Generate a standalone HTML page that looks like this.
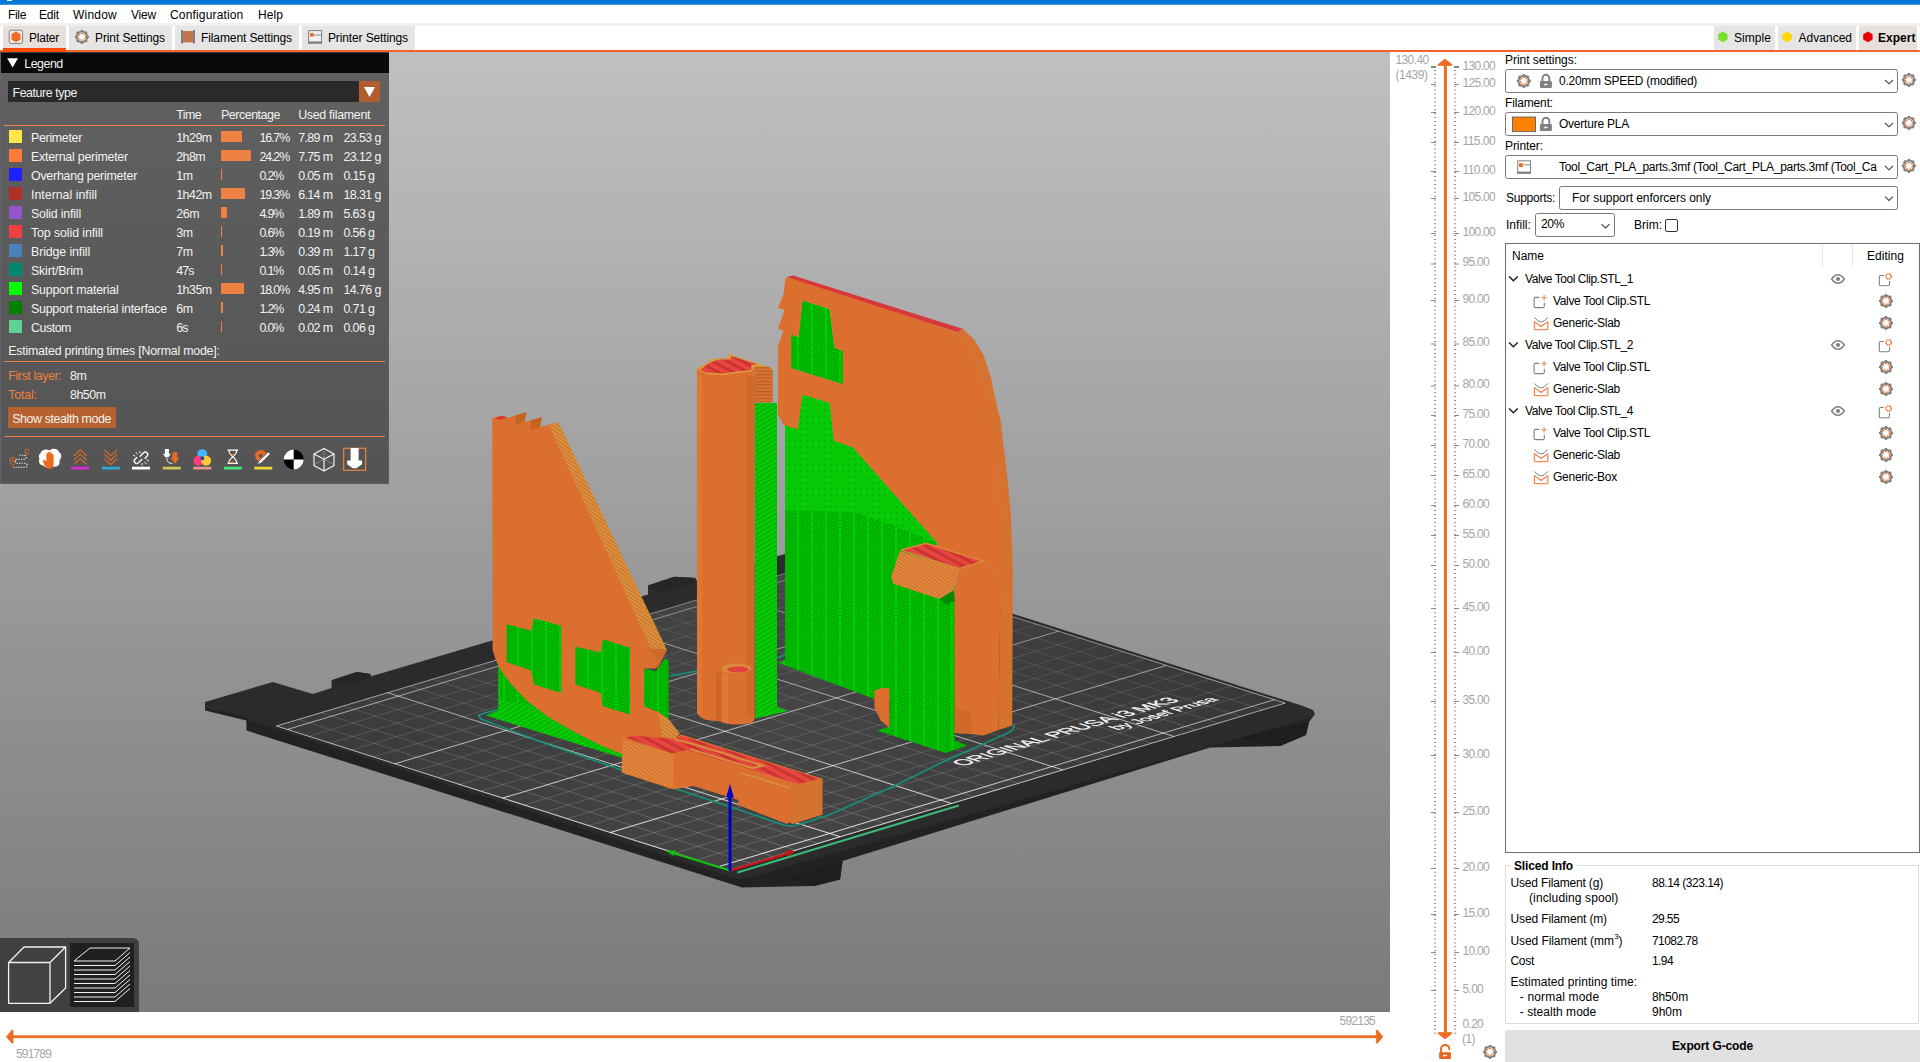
<!DOCTYPE html>
<html lang="en"><head><meta charset="utf-8"><title>PrusaSlicer</title>
<style>
html,body{margin:0;padding:0;width:1920px;height:1062px;overflow:hidden;background:#fff;font-family:'Liberation Sans',sans-serif;}
.a{position:absolute}
.t{position:absolute;white-space:pre;line-height:20px;height:20px;font-family:'Liberation Sans',sans-serif;}
#title{left:0;top:0;width:1920px;height:4px;background:#0078d7;border-bottom:1px solid #3d97e0}
#menusep{left:0;top:23px;width:1920px;height:3px;background:#f0f0f0}
.tab{position:absolute;top:26px;height:24px;background:#e5e5e5}
#oline{left:0;top:50px;width:1920px;height:2px;background:#f2642a}
#canvas{left:0;top:52px;width:1390px;height:960px;background:linear-gradient(#c0c0c0,#7a7a7a);overflow:hidden}
#legend{left:1px;top:52px;width:387px;height:431px;background:linear-gradient(#616161,#545454);border-right:1px solid #5c5c66;border-bottom:1px solid #5c5c66}
#lghead{left:1px;top:52px;width:388px;height:21px;background:#0a0a0a}
#lgcombo{left:8px;top:81px;width:351px;height:21px;background:#2a2a2a}
#lgbtn{left:359px;top:81px;width:21px;height:21px;background:#b05e30}
.osep{position:absolute;left:4px;width:381px;height:1px;background:#ee8040}
.sw{position:absolute;left:9px;width:13px;height:13px}
.bar{position:absolute;left:221px;height:11px;background:#ee8244}
#stealth{left:8px;top:407px;width:108px;height:21px;background:#b5622f}
#vtool{left:0;top:938px;width:139px;height:74px;background:#404040;border-top-right-radius:6px}
#vsel{left:70px;top:943px;width:64px;height:64px;background:#202020}
.combo{position:absolute;height:22px;border:1px solid #7a7a7a;border-radius:2.5px;background:#fff;box-sizing:content-box}
#olist{left:1505px;top:243px;width:413px;height:608px;border:1px solid #6e6e6e;background:#fff}
#sinfo{left:1505px;top:865px;width:1412px;height:157px;border:1px solid #dcdcdc}
#export{left:1505px;top:1030px;width:415px;height:32px;background:#e1e1e1}
</style></head><body>
<div class="a" id="title"></div>
<div class="a" id="wico" style="left:7px;top:0;width:5px;height:1px;background:#e8f1fa"></div>
<div class="a" id="menusep"></div>
<div class="tab" style="left:3px;width:63px;background:#e7dfdb"></div>
<div class="tab" style="left:69px;width:103px"></div>
<div class="tab" style="left:175px;width:124px"></div>
<div class="tab" style="left:302px;width:113px"></div>
<div class="tab" style="left:1714px;width:61px"></div>
<div class="tab" style="left:1778px;width:78px"></div>
<div class="tab" style="left:1859px;width:58px;background:#e7dfdb"></div>
<div class="a" id="oline"></div>
<div class="a" style="left:3px;top:48px;width:63px;height:4px;background:#fa4b00"></div>
<div class="a" id="canvas">
<svg class="a" style="left:0;top:0" width="1390" height="960" viewBox="0 52 1390 960">
<defs>
<pattern id="gs" width="14" height="4.4" patternUnits="userSpaceOnUse"><rect width="14" height="4.4" fill="#00e400"/><g fill="none" stroke="#009a00" stroke-width="1.25"><polyline points="0,4.4 7,0 14,4.4"/><polyline points="0,2.2 7,-2.2 14,2.2"/><polyline points="0,6.6 7,2.2 14,6.6"/></g><rect x="6.4" width="1.2" height="4.4" fill="#00a800" opacity="0.55"/><rect x="-0.6" width="1.2" height="4.4" fill="#00f000" opacity="0.5"/><rect x="13.4" width="1.2" height="4.4" fill="#00f000" opacity="0.5"/></pattern>
<pattern id="gc" width="6" height="6" patternUnits="userSpaceOnUse"><rect width="6" height="6" fill="#06cb06"/><circle cx="3" cy="3" r="1.25" fill="#05b805"/></pattern>
<pattern id="gd" width="4" height="4" patternUnits="userSpaceOnUse" patternTransform="rotate(-30)"><rect width="4" height="4" fill="#07cc07"/><rect width="4" height="1.3" fill="#05ac05"/></pattern>
<pattern id="rs" width="7" height="7" patternUnits="userSpaceOnUse" patternTransform="rotate(-62)"><rect width="7" height="7" fill="#e8453f"/><rect width="3" height="7" fill="#c93431"/></pattern>
<pattern id="oh" width="2" height="2" patternUnits="userSpaceOnUse"><rect width="2" height="2" fill="#e87733"/><rect width="1" height="1" fill="#cf672b"/><rect x="1" y="1" width="1" height="1" fill="#cf672b"/></pattern>
<pattern id="oy" width="3" height="3" patternUnits="userSpaceOnUse" patternTransform="rotate(35)"><rect width="3" height="3" fill="#d27a33"/><rect width="3" height="1" fill="#d9a040"/></pattern>
<pattern id="op" width="4" height="3.4" patternUnits="userSpaceOnUse"><rect width="4" height="3.4" fill="#d87431"/><rect width="4" height="1.2" fill="#b85f22"/></pattern>
<pattern id="oc" width="3" height="3" patternUnits="userSpaceOnUse" patternTransform="rotate(35)"><rect width="3" height="3" fill="#d46c2e"/><rect width="3" height="1" fill="#da7c33"/></pattern>
<pattern id="ob" width="3" height="3" patternUnits="userSpaceOnUse" patternTransform="rotate(35)"><rect width="3" height="3" fill="#d97732"/><rect width="3" height="1" fill="#e09244"/></pattern>
<linearGradient id="bedg" x1="0" y1="0" x2="1" y2="0"><stop offset="0" stop-color="#3a3a3a"/><stop offset="0.5" stop-color="#454545"/><stop offset="1" stop-color="#373737"/></linearGradient>
</defs>
<polygon points="205.0,702.0 205.0,710.5 246.4,720.4 246.4,730.5 742.0,887.5 814.0,886.0 840.0,879.5 842.5,861.0 1210.0,747.5 1280.0,746.0 1306.0,735.0 1309.0,722.0 1315.0,714.0 1300.0,708.0 740.0,868.0 250.0,716.0" fill="#222222" />
<polygon points="814.0,886.0 840.0,879.5 842.5,861.0 790.0,878.0" fill="#1e1e1e" />
<polygon points="1280.0,746.0 1306.0,735.0 1309.0,722.0 1240.0,738.0" fill="#1e1e1e" />
<polygon points="205.0,702.0 272.7,682.0 312.8,694.1 331.6,687.9 331.6,680.3 356.7,672.0 370.5,674.0 370.5,676.5 648.0,594.4 648.0,585.5 674.3,576.7 695.6,578.0 695.6,580.4 807.0,547.4 1012.0,613.5 1303.0,706.0 1313.0,710.0 1315.0,714.0 1310.0,718.0 745.0,878.5 737.0,879.0 730.0,877.0 250.0,720.5 246.0,717.0 205.0,708.0" fill="#2b2b2b" />
<polygon points="331.6,680.3 356.7,672.0 370.5,674.0 370.5,677.5 345.0,687.0" fill="#262626" />
<polygon points="648.0,585.5 674.3,576.7 695.6,578.0 695.6,582.0 662.0,592.0" fill="#262626" />
<polygon points="729.0,870.2 1285.2,703.1 832.2,559.3 276.5,726.0" fill="url(#bedg)" />
<line x1="729.0" y1="870.2" x2="683.6" y2="855.8" stroke="#fff" stroke-opacity="0.84" stroke-width="1.05"/>
<line x1="683.6" y1="855.8" x2="638.3" y2="841.4" stroke="#fff" stroke-opacity="0.82" stroke-width="1.04"/>
<line x1="638.3" y1="841.4" x2="593.1" y2="826.9" stroke="#fff" stroke-opacity="0.79" stroke-width="1.03"/>
<line x1="593.1" y1="826.9" x2="547.8" y2="812.5" stroke="#fff" stroke-opacity="0.77" stroke-width="1.03"/>
<line x1="547.8" y1="812.5" x2="502.5" y2="798.1" stroke="#fff" stroke-opacity="0.75" stroke-width="1.02"/>
<line x1="502.5" y1="798.1" x2="457.3" y2="783.7" stroke="#fff" stroke-opacity="0.72" stroke-width="1.01"/>
<line x1="457.3" y1="783.7" x2="412.1" y2="769.3" stroke="#fff" stroke-opacity="0.70" stroke-width="1.00"/>
<line x1="412.1" y1="769.3" x2="366.9" y2="754.8" stroke="#fff" stroke-opacity="0.68" stroke-width="1.00"/>
<line x1="366.9" y1="754.8" x2="321.7" y2="740.4" stroke="#fff" stroke-opacity="0.66" stroke-width="0.99"/>
<line x1="321.7" y1="740.4" x2="276.5" y2="726.0" stroke="#fff" stroke-opacity="0.63" stroke-width="0.98"/>
<line x1="751.2" y1="863.6" x2="705.9" y2="849.1" stroke="#fff" stroke-opacity="0.26" stroke-width="0.70"/>
<line x1="705.9" y1="849.1" x2="660.6" y2="834.7" stroke="#fff" stroke-opacity="0.26" stroke-width="0.69"/>
<line x1="660.6" y1="834.7" x2="615.3" y2="820.2" stroke="#fff" stroke-opacity="0.25" stroke-width="0.69"/>
<line x1="615.3" y1="820.2" x2="570.1" y2="805.8" stroke="#fff" stroke-opacity="0.24" stroke-width="0.68"/>
<line x1="570.1" y1="805.8" x2="524.8" y2="791.4" stroke="#fff" stroke-opacity="0.23" stroke-width="0.68"/>
<line x1="524.8" y1="791.4" x2="479.6" y2="777.0" stroke="#fff" stroke-opacity="0.23" stroke-width="0.67"/>
<line x1="479.6" y1="777.0" x2="434.3" y2="762.6" stroke="#fff" stroke-opacity="0.22" stroke-width="0.67"/>
<line x1="434.3" y1="762.6" x2="389.1" y2="748.2" stroke="#fff" stroke-opacity="0.21" stroke-width="0.66"/>
<line x1="389.1" y1="748.2" x2="343.9" y2="733.8" stroke="#fff" stroke-opacity="0.20" stroke-width="0.66"/>
<line x1="343.9" y1="733.8" x2="298.7" y2="719.4" stroke="#fff" stroke-opacity="0.20" stroke-width="0.65"/>
<line x1="773.5" y1="856.9" x2="728.2" y2="842.4" stroke="#fff" stroke-opacity="0.26" stroke-width="0.69"/>
<line x1="728.2" y1="842.4" x2="682.9" y2="828.0" stroke="#fff" stroke-opacity="0.25" stroke-width="0.69"/>
<line x1="682.9" y1="828.0" x2="637.6" y2="813.6" stroke="#fff" stroke-opacity="0.25" stroke-width="0.68"/>
<line x1="637.6" y1="813.6" x2="592.3" y2="799.1" stroke="#fff" stroke-opacity="0.24" stroke-width="0.68"/>
<line x1="592.3" y1="799.1" x2="547.1" y2="784.7" stroke="#fff" stroke-opacity="0.23" stroke-width="0.67"/>
<line x1="547.1" y1="784.7" x2="501.8" y2="770.3" stroke="#fff" stroke-opacity="0.22" stroke-width="0.67"/>
<line x1="501.8" y1="770.3" x2="456.6" y2="755.9" stroke="#fff" stroke-opacity="0.22" stroke-width="0.66"/>
<line x1="456.6" y1="755.9" x2="411.4" y2="741.5" stroke="#fff" stroke-opacity="0.21" stroke-width="0.66"/>
<line x1="411.4" y1="741.5" x2="366.2" y2="727.1" stroke="#fff" stroke-opacity="0.20" stroke-width="0.66"/>
<line x1="366.2" y1="727.1" x2="321.0" y2="712.7" stroke="#fff" stroke-opacity="0.19" stroke-width="0.65"/>
<line x1="795.8" y1="850.2" x2="750.4" y2="835.7" stroke="#fff" stroke-opacity="0.26" stroke-width="0.69"/>
<line x1="750.4" y1="835.7" x2="705.1" y2="821.3" stroke="#fff" stroke-opacity="0.25" stroke-width="0.69"/>
<line x1="705.1" y1="821.3" x2="659.8" y2="806.9" stroke="#fff" stroke-opacity="0.24" stroke-width="0.68"/>
<line x1="659.8" y1="806.9" x2="614.6" y2="792.5" stroke="#fff" stroke-opacity="0.23" stroke-width="0.68"/>
<line x1="614.6" y1="792.5" x2="569.3" y2="778.0" stroke="#fff" stroke-opacity="0.23" stroke-width="0.67"/>
<line x1="569.3" y1="778.0" x2="524.1" y2="763.6" stroke="#fff" stroke-opacity="0.22" stroke-width="0.67"/>
<line x1="524.1" y1="763.6" x2="478.8" y2="749.2" stroke="#fff" stroke-opacity="0.21" stroke-width="0.66"/>
<line x1="478.8" y1="749.2" x2="433.6" y2="734.8" stroke="#fff" stroke-opacity="0.21" stroke-width="0.66"/>
<line x1="433.6" y1="734.8" x2="388.4" y2="720.4" stroke="#fff" stroke-opacity="0.20" stroke-width="0.65"/>
<line x1="388.4" y1="720.4" x2="343.2" y2="706.0" stroke="#fff" stroke-opacity="0.19" stroke-width="0.65"/>
<line x1="818.0" y1="843.5" x2="772.7" y2="829.1" stroke="#fff" stroke-opacity="0.25" stroke-width="0.69"/>
<line x1="772.7" y1="829.1" x2="727.4" y2="814.6" stroke="#fff" stroke-opacity="0.25" stroke-width="0.68"/>
<line x1="727.4" y1="814.6" x2="682.1" y2="800.2" stroke="#fff" stroke-opacity="0.24" stroke-width="0.68"/>
<line x1="682.1" y1="800.2" x2="636.8" y2="785.8" stroke="#fff" stroke-opacity="0.23" stroke-width="0.67"/>
<line x1="636.8" y1="785.8" x2="591.6" y2="771.4" stroke="#fff" stroke-opacity="0.22" stroke-width="0.67"/>
<line x1="591.6" y1="771.4" x2="546.3" y2="756.9" stroke="#fff" stroke-opacity="0.22" stroke-width="0.67"/>
<line x1="546.3" y1="756.9" x2="501.1" y2="742.5" stroke="#fff" stroke-opacity="0.21" stroke-width="0.66"/>
<line x1="501.1" y1="742.5" x2="455.9" y2="728.1" stroke="#fff" stroke-opacity="0.20" stroke-width="0.66"/>
<line x1="455.9" y1="728.1" x2="410.7" y2="713.7" stroke="#fff" stroke-opacity="0.19" stroke-width="0.65"/>
<line x1="410.7" y1="713.7" x2="365.5" y2="699.3" stroke="#fff" stroke-opacity="0.19" stroke-width="0.65"/>
<line x1="840.3" y1="836.8" x2="795.0" y2="822.4" stroke="#fff" stroke-opacity="0.79" stroke-width="1.03"/>
<line x1="795.0" y1="822.4" x2="749.7" y2="807.9" stroke="#fff" stroke-opacity="0.76" stroke-width="1.02"/>
<line x1="749.7" y1="807.9" x2="704.4" y2="793.5" stroke="#fff" stroke-opacity="0.74" stroke-width="1.02"/>
<line x1="704.4" y1="793.5" x2="659.1" y2="779.1" stroke="#fff" stroke-opacity="0.72" stroke-width="1.01"/>
<line x1="659.1" y1="779.1" x2="613.8" y2="764.7" stroke="#fff" stroke-opacity="0.69" stroke-width="1.00"/>
<line x1="613.8" y1="764.7" x2="568.6" y2="750.3" stroke="#fff" stroke-opacity="0.67" stroke-width="0.99"/>
<line x1="568.6" y1="750.3" x2="523.3" y2="735.9" stroke="#fff" stroke-opacity="0.65" stroke-width="0.99"/>
<line x1="523.3" y1="735.9" x2="478.1" y2="721.5" stroke="#fff" stroke-opacity="0.63" stroke-width="0.98"/>
<line x1="478.1" y1="721.5" x2="432.9" y2="707.1" stroke="#fff" stroke-opacity="0.60" stroke-width="0.97"/>
<line x1="432.9" y1="707.1" x2="387.7" y2="692.7" stroke="#fff" stroke-opacity="0.58" stroke-width="0.97"/>
<line x1="862.5" y1="830.1" x2="817.2" y2="815.7" stroke="#fff" stroke-opacity="0.25" stroke-width="0.68"/>
<line x1="817.2" y1="815.7" x2="771.9" y2="801.3" stroke="#fff" stroke-opacity="0.24" stroke-width="0.68"/>
<line x1="771.9" y1="801.3" x2="726.6" y2="786.8" stroke="#fff" stroke-opacity="0.23" stroke-width="0.68"/>
<line x1="726.6" y1="786.8" x2="681.3" y2="772.4" stroke="#fff" stroke-opacity="0.22" stroke-width="0.67"/>
<line x1="681.3" y1="772.4" x2="636.1" y2="758.0" stroke="#fff" stroke-opacity="0.22" stroke-width="0.67"/>
<line x1="636.1" y1="758.0" x2="590.8" y2="743.6" stroke="#fff" stroke-opacity="0.21" stroke-width="0.66"/>
<line x1="590.8" y1="743.6" x2="545.6" y2="729.2" stroke="#fff" stroke-opacity="0.20" stroke-width="0.66"/>
<line x1="545.6" y1="729.2" x2="500.4" y2="714.8" stroke="#fff" stroke-opacity="0.20" stroke-width="0.65"/>
<line x1="500.4" y1="714.8" x2="455.1" y2="700.4" stroke="#fff" stroke-opacity="0.19" stroke-width="0.65"/>
<line x1="455.1" y1="700.4" x2="410.0" y2="686.0" stroke="#fff" stroke-opacity="0.18" stroke-width="0.64"/>
<line x1="884.8" y1="823.4" x2="839.5" y2="809.0" stroke="#fff" stroke-opacity="0.24" stroke-width="0.68"/>
<line x1="839.5" y1="809.0" x2="794.2" y2="794.6" stroke="#fff" stroke-opacity="0.24" stroke-width="0.68"/>
<line x1="794.2" y1="794.6" x2="748.9" y2="780.1" stroke="#fff" stroke-opacity="0.23" stroke-width="0.67"/>
<line x1="748.9" y1="780.1" x2="703.6" y2="765.7" stroke="#fff" stroke-opacity="0.22" stroke-width="0.67"/>
<line x1="703.6" y1="765.7" x2="658.3" y2="751.3" stroke="#fff" stroke-opacity="0.21" stroke-width="0.66"/>
<line x1="658.3" y1="751.3" x2="613.1" y2="736.9" stroke="#fff" stroke-opacity="0.21" stroke-width="0.66"/>
<line x1="613.1" y1="736.9" x2="567.8" y2="722.5" stroke="#fff" stroke-opacity="0.20" stroke-width="0.65"/>
<line x1="567.8" y1="722.5" x2="522.6" y2="708.1" stroke="#fff" stroke-opacity="0.19" stroke-width="0.65"/>
<line x1="522.6" y1="708.1" x2="477.4" y2="693.7" stroke="#fff" stroke-opacity="0.18" stroke-width="0.64"/>
<line x1="477.4" y1="693.7" x2="432.2" y2="679.3" stroke="#fff" stroke-opacity="0.18" stroke-width="0.64"/>
<line x1="907.1" y1="816.7" x2="861.7" y2="802.3" stroke="#fff" stroke-opacity="0.24" stroke-width="0.68"/>
<line x1="861.7" y1="802.3" x2="816.4" y2="787.9" stroke="#fff" stroke-opacity="0.23" stroke-width="0.68"/>
<line x1="816.4" y1="787.9" x2="771.1" y2="773.5" stroke="#fff" stroke-opacity="0.22" stroke-width="0.67"/>
<line x1="771.1" y1="773.5" x2="725.8" y2="759.1" stroke="#fff" stroke-opacity="0.22" stroke-width="0.67"/>
<line x1="725.8" y1="759.1" x2="680.6" y2="744.6" stroke="#fff" stroke-opacity="0.21" stroke-width="0.66"/>
<line x1="680.6" y1="744.6" x2="635.3" y2="730.2" stroke="#fff" stroke-opacity="0.20" stroke-width="0.66"/>
<line x1="635.3" y1="730.2" x2="590.1" y2="715.8" stroke="#fff" stroke-opacity="0.20" stroke-width="0.65"/>
<line x1="590.1" y1="715.8" x2="544.8" y2="701.4" stroke="#fff" stroke-opacity="0.19" stroke-width="0.65"/>
<line x1="544.8" y1="701.4" x2="499.6" y2="687.0" stroke="#fff" stroke-opacity="0.18" stroke-width="0.64"/>
<line x1="499.6" y1="687.0" x2="454.4" y2="672.7" stroke="#fff" stroke-opacity="0.17" stroke-width="0.64"/>
<line x1="929.3" y1="810.1" x2="884.0" y2="795.6" stroke="#fff" stroke-opacity="0.24" stroke-width="0.68"/>
<line x1="884.0" y1="795.6" x2="838.7" y2="781.2" stroke="#fff" stroke-opacity="0.23" stroke-width="0.67"/>
<line x1="838.7" y1="781.2" x2="793.4" y2="766.8" stroke="#fff" stroke-opacity="0.22" stroke-width="0.67"/>
<line x1="793.4" y1="766.8" x2="748.1" y2="752.4" stroke="#fff" stroke-opacity="0.21" stroke-width="0.66"/>
<line x1="748.1" y1="752.4" x2="702.8" y2="738.0" stroke="#fff" stroke-opacity="0.21" stroke-width="0.66"/>
<line x1="702.8" y1="738.0" x2="657.6" y2="723.6" stroke="#fff" stroke-opacity="0.20" stroke-width="0.65"/>
<line x1="657.6" y1="723.6" x2="612.3" y2="709.2" stroke="#fff" stroke-opacity="0.19" stroke-width="0.65"/>
<line x1="612.3" y1="709.2" x2="567.1" y2="694.8" stroke="#fff" stroke-opacity="0.19" stroke-width="0.64"/>
<line x1="567.1" y1="694.8" x2="521.9" y2="680.4" stroke="#fff" stroke-opacity="0.18" stroke-width="0.64"/>
<line x1="521.9" y1="680.4" x2="476.7" y2="666.0" stroke="#fff" stroke-opacity="0.17" stroke-width="0.64"/>
<line x1="951.6" y1="803.4" x2="906.2" y2="788.9" stroke="#fff" stroke-opacity="0.73" stroke-width="1.01"/>
<line x1="906.2" y1="788.9" x2="860.9" y2="774.5" stroke="#fff" stroke-opacity="0.71" stroke-width="1.01"/>
<line x1="860.9" y1="774.5" x2="815.6" y2="760.1" stroke="#fff" stroke-opacity="0.69" stroke-width="1.00"/>
<line x1="815.6" y1="760.1" x2="770.3" y2="745.7" stroke="#fff" stroke-opacity="0.66" stroke-width="0.99"/>
<line x1="770.3" y1="745.7" x2="725.1" y2="731.3" stroke="#fff" stroke-opacity="0.64" stroke-width="0.99"/>
<line x1="725.1" y1="731.3" x2="679.8" y2="716.9" stroke="#fff" stroke-opacity="0.62" stroke-width="0.98"/>
<line x1="679.8" y1="716.9" x2="634.5" y2="702.5" stroke="#fff" stroke-opacity="0.60" stroke-width="0.97"/>
<line x1="634.5" y1="702.5" x2="589.3" y2="688.1" stroke="#fff" stroke-opacity="0.57" stroke-width="0.96"/>
<line x1="589.3" y1="688.1" x2="544.1" y2="673.7" stroke="#fff" stroke-opacity="0.55" stroke-width="0.96"/>
<line x1="544.1" y1="673.7" x2="498.9" y2="659.3" stroke="#fff" stroke-opacity="0.53" stroke-width="0.95"/>
<line x1="973.8" y1="796.7" x2="928.5" y2="782.3" stroke="#fff" stroke-opacity="0.23" stroke-width="0.67"/>
<line x1="928.5" y1="782.3" x2="883.2" y2="767.8" stroke="#fff" stroke-opacity="0.22" stroke-width="0.67"/>
<line x1="883.2" y1="767.8" x2="837.9" y2="753.4" stroke="#fff" stroke-opacity="0.21" stroke-width="0.66"/>
<line x1="837.9" y1="753.4" x2="792.6" y2="739.0" stroke="#fff" stroke-opacity="0.21" stroke-width="0.66"/>
<line x1="792.6" y1="739.0" x2="747.3" y2="724.6" stroke="#fff" stroke-opacity="0.20" stroke-width="0.65"/>
<line x1="747.3" y1="724.6" x2="702.0" y2="710.2" stroke="#fff" stroke-opacity="0.19" stroke-width="0.65"/>
<line x1="702.0" y1="710.2" x2="656.8" y2="695.8" stroke="#fff" stroke-opacity="0.19" stroke-width="0.65"/>
<line x1="656.8" y1="695.8" x2="611.6" y2="681.4" stroke="#fff" stroke-opacity="0.18" stroke-width="0.64"/>
<line x1="611.6" y1="681.4" x2="566.3" y2="667.0" stroke="#fff" stroke-opacity="0.17" stroke-width="0.64"/>
<line x1="566.3" y1="667.0" x2="521.1" y2="652.7" stroke="#fff" stroke-opacity="0.16" stroke-width="0.63"/>
<line x1="996.1" y1="790.0" x2="950.7" y2="775.6" stroke="#fff" stroke-opacity="0.23" stroke-width="0.67"/>
<line x1="950.7" y1="775.6" x2="905.4" y2="761.2" stroke="#fff" stroke-opacity="0.22" stroke-width="0.67"/>
<line x1="905.4" y1="761.2" x2="860.1" y2="746.7" stroke="#fff" stroke-opacity="0.21" stroke-width="0.66"/>
<line x1="860.1" y1="746.7" x2="814.8" y2="732.3" stroke="#fff" stroke-opacity="0.20" stroke-width="0.66"/>
<line x1="814.8" y1="732.3" x2="769.5" y2="717.9" stroke="#fff" stroke-opacity="0.20" stroke-width="0.65"/>
<line x1="769.5" y1="717.9" x2="724.3" y2="703.5" stroke="#fff" stroke-opacity="0.19" stroke-width="0.65"/>
<line x1="724.3" y1="703.5" x2="679.0" y2="689.1" stroke="#fff" stroke-opacity="0.18" stroke-width="0.64"/>
<line x1="679.0" y1="689.1" x2="633.8" y2="674.7" stroke="#fff" stroke-opacity="0.18" stroke-width="0.64"/>
<line x1="633.8" y1="674.7" x2="588.6" y2="660.4" stroke="#fff" stroke-opacity="0.17" stroke-width="0.63"/>
<line x1="588.6" y1="660.4" x2="543.4" y2="646.0" stroke="#fff" stroke-opacity="0.16" stroke-width="0.63"/>
<line x1="1018.3" y1="783.3" x2="973.0" y2="768.9" stroke="#fff" stroke-opacity="0.22" stroke-width="0.67"/>
<line x1="973.0" y1="768.9" x2="927.7" y2="754.5" stroke="#fff" stroke-opacity="0.22" stroke-width="0.66"/>
<line x1="927.7" y1="754.5" x2="882.4" y2="740.1" stroke="#fff" stroke-opacity="0.21" stroke-width="0.66"/>
<line x1="882.4" y1="740.1" x2="837.1" y2="725.7" stroke="#fff" stroke-opacity="0.20" stroke-width="0.66"/>
<line x1="837.1" y1="725.7" x2="791.8" y2="711.3" stroke="#fff" stroke-opacity="0.19" stroke-width="0.65"/>
<line x1="791.8" y1="711.3" x2="746.5" y2="696.9" stroke="#fff" stroke-opacity="0.19" stroke-width="0.65"/>
<line x1="746.5" y1="696.9" x2="701.3" y2="682.5" stroke="#fff" stroke-opacity="0.18" stroke-width="0.64"/>
<line x1="701.3" y1="682.5" x2="656.0" y2="668.1" stroke="#fff" stroke-opacity="0.17" stroke-width="0.64"/>
<line x1="656.0" y1="668.1" x2="610.8" y2="653.7" stroke="#fff" stroke-opacity="0.16" stroke-width="0.63"/>
<line x1="610.8" y1="653.7" x2="565.6" y2="639.3" stroke="#fff" stroke-opacity="0.16" stroke-width="0.63"/>
<line x1="1040.6" y1="776.6" x2="995.2" y2="762.2" stroke="#fff" stroke-opacity="0.22" stroke-width="0.67"/>
<line x1="995.2" y1="762.2" x2="949.9" y2="747.8" stroke="#fff" stroke-opacity="0.21" stroke-width="0.66"/>
<line x1="949.9" y1="747.8" x2="904.6" y2="733.4" stroke="#fff" stroke-opacity="0.20" stroke-width="0.66"/>
<line x1="904.6" y1="733.4" x2="859.3" y2="719.0" stroke="#fff" stroke-opacity="0.20" stroke-width="0.65"/>
<line x1="859.3" y1="719.0" x2="814.0" y2="704.6" stroke="#fff" stroke-opacity="0.19" stroke-width="0.65"/>
<line x1="814.0" y1="704.6" x2="768.8" y2="690.2" stroke="#fff" stroke-opacity="0.18" stroke-width="0.64"/>
<line x1="768.8" y1="690.2" x2="723.5" y2="675.8" stroke="#fff" stroke-opacity="0.18" stroke-width="0.64"/>
<line x1="723.5" y1="675.8" x2="678.3" y2="661.4" stroke="#fff" stroke-opacity="0.17" stroke-width="0.63"/>
<line x1="678.3" y1="661.4" x2="633.0" y2="647.0" stroke="#fff" stroke-opacity="0.16" stroke-width="0.63"/>
<line x1="633.0" y1="647.0" x2="587.8" y2="632.6" stroke="#fff" stroke-opacity="0.15" stroke-width="0.62"/>
<line x1="1062.8" y1="769.9" x2="1017.5" y2="755.5" stroke="#fff" stroke-opacity="0.68" stroke-width="1.00"/>
<line x1="1017.5" y1="755.5" x2="972.2" y2="741.1" stroke="#fff" stroke-opacity="0.66" stroke-width="0.99"/>
<line x1="972.2" y1="741.1" x2="926.8" y2="726.7" stroke="#fff" stroke-opacity="0.63" stroke-width="0.98"/>
<line x1="926.8" y1="726.7" x2="881.5" y2="712.3" stroke="#fff" stroke-opacity="0.61" stroke-width="0.98"/>
<line x1="881.5" y1="712.3" x2="836.3" y2="697.9" stroke="#fff" stroke-opacity="0.59" stroke-width="0.97"/>
<line x1="836.3" y1="697.9" x2="791.0" y2="683.5" stroke="#fff" stroke-opacity="0.56" stroke-width="0.96"/>
<line x1="791.0" y1="683.5" x2="745.7" y2="669.1" stroke="#fff" stroke-opacity="0.54" stroke-width="0.95"/>
<line x1="745.7" y1="669.1" x2="700.5" y2="654.7" stroke="#fff" stroke-opacity="0.52" stroke-width="0.95"/>
<line x1="700.5" y1="654.7" x2="655.3" y2="640.4" stroke="#fff" stroke-opacity="0.50" stroke-width="0.94"/>
<line x1="655.3" y1="640.4" x2="610.0" y2="626.0" stroke="#fff" stroke-opacity="0.47" stroke-width="0.93"/>
<line x1="1085.1" y1="763.3" x2="1039.7" y2="748.8" stroke="#fff" stroke-opacity="0.21" stroke-width="0.66"/>
<line x1="1039.7" y1="748.8" x2="994.4" y2="734.4" stroke="#fff" stroke-opacity="0.21" stroke-width="0.66"/>
<line x1="994.4" y1="734.4" x2="949.1" y2="720.0" stroke="#fff" stroke-opacity="0.20" stroke-width="0.65"/>
<line x1="949.1" y1="720.0" x2="903.8" y2="705.6" stroke="#fff" stroke-opacity="0.19" stroke-width="0.65"/>
<line x1="903.8" y1="705.6" x2="858.5" y2="691.2" stroke="#fff" stroke-opacity="0.18" stroke-width="0.64"/>
<line x1="858.5" y1="691.2" x2="813.2" y2="676.8" stroke="#fff" stroke-opacity="0.18" stroke-width="0.64"/>
<line x1="813.2" y1="676.8" x2="768.0" y2="662.4" stroke="#fff" stroke-opacity="0.17" stroke-width="0.63"/>
<line x1="768.0" y1="662.4" x2="722.7" y2="648.1" stroke="#fff" stroke-opacity="0.16" stroke-width="0.63"/>
<line x1="722.7" y1="648.1" x2="677.5" y2="633.7" stroke="#fff" stroke-opacity="0.15" stroke-width="0.62"/>
<line x1="677.5" y1="633.7" x2="632.3" y2="619.3" stroke="#fff" stroke-opacity="0.15" stroke-width="0.62"/>
<line x1="1107.3" y1="756.6" x2="1062.0" y2="742.2" stroke="#fff" stroke-opacity="0.21" stroke-width="0.66"/>
<line x1="1062.0" y1="742.2" x2="1016.6" y2="727.8" stroke="#fff" stroke-opacity="0.20" stroke-width="0.66"/>
<line x1="1016.6" y1="727.8" x2="971.3" y2="713.4" stroke="#fff" stroke-opacity="0.19" stroke-width="0.65"/>
<line x1="971.3" y1="713.4" x2="926.0" y2="699.0" stroke="#fff" stroke-opacity="0.19" stroke-width="0.65"/>
<line x1="926.0" y1="699.0" x2="880.7" y2="684.6" stroke="#fff" stroke-opacity="0.18" stroke-width="0.64"/>
<line x1="880.7" y1="684.6" x2="835.5" y2="670.2" stroke="#fff" stroke-opacity="0.17" stroke-width="0.64"/>
<line x1="835.5" y1="670.2" x2="790.2" y2="655.8" stroke="#fff" stroke-opacity="0.17" stroke-width="0.63"/>
<line x1="790.2" y1="655.8" x2="744.9" y2="641.4" stroke="#fff" stroke-opacity="0.16" stroke-width="0.63"/>
<line x1="744.9" y1="641.4" x2="699.7" y2="627.0" stroke="#fff" stroke-opacity="0.15" stroke-width="0.62"/>
<line x1="699.7" y1="627.0" x2="654.5" y2="612.6" stroke="#fff" stroke-opacity="0.14" stroke-width="0.62"/>
<line x1="1129.6" y1="749.9" x2="1084.2" y2="735.5" stroke="#fff" stroke-opacity="0.21" stroke-width="0.66"/>
<line x1="1084.2" y1="735.5" x2="1038.9" y2="721.1" stroke="#fff" stroke-opacity="0.20" stroke-width="0.65"/>
<line x1="1038.9" y1="721.1" x2="993.6" y2="706.7" stroke="#fff" stroke-opacity="0.19" stroke-width="0.65"/>
<line x1="993.6" y1="706.7" x2="948.2" y2="692.3" stroke="#fff" stroke-opacity="0.18" stroke-width="0.64"/>
<line x1="948.2" y1="692.3" x2="903.0" y2="677.9" stroke="#fff" stroke-opacity="0.18" stroke-width="0.64"/>
<line x1="903.0" y1="677.9" x2="857.7" y2="663.5" stroke="#fff" stroke-opacity="0.17" stroke-width="0.63"/>
<line x1="857.7" y1="663.5" x2="812.4" y2="649.1" stroke="#fff" stroke-opacity="0.16" stroke-width="0.63"/>
<line x1="812.4" y1="649.1" x2="767.2" y2="634.7" stroke="#fff" stroke-opacity="0.15" stroke-width="0.63"/>
<line x1="767.2" y1="634.7" x2="721.9" y2="620.3" stroke="#fff" stroke-opacity="0.15" stroke-width="0.62"/>
<line x1="721.9" y1="620.3" x2="676.7" y2="606.0" stroke="#fff" stroke-opacity="0.14" stroke-width="0.62"/>
<line x1="1151.8" y1="743.2" x2="1106.4" y2="728.8" stroke="#fff" stroke-opacity="0.20" stroke-width="0.66"/>
<line x1="1106.4" y1="728.8" x2="1061.1" y2="714.4" stroke="#fff" stroke-opacity="0.20" stroke-width="0.65"/>
<line x1="1061.1" y1="714.4" x2="1015.8" y2="700.0" stroke="#fff" stroke-opacity="0.19" stroke-width="0.65"/>
<line x1="1015.8" y1="700.0" x2="970.5" y2="685.6" stroke="#fff" stroke-opacity="0.18" stroke-width="0.64"/>
<line x1="970.5" y1="685.6" x2="925.2" y2="671.2" stroke="#fff" stroke-opacity="0.17" stroke-width="0.64"/>
<line x1="925.2" y1="671.2" x2="879.9" y2="656.8" stroke="#fff" stroke-opacity="0.17" stroke-width="0.63"/>
<line x1="879.9" y1="656.8" x2="834.6" y2="642.4" stroke="#fff" stroke-opacity="0.16" stroke-width="0.63"/>
<line x1="834.6" y1="642.4" x2="789.4" y2="628.1" stroke="#fff" stroke-opacity="0.15" stroke-width="0.62"/>
<line x1="789.4" y1="628.1" x2="744.2" y2="613.7" stroke="#fff" stroke-opacity="0.14" stroke-width="0.62"/>
<line x1="744.2" y1="613.7" x2="698.9" y2="599.3" stroke="#fff" stroke-opacity="0.14" stroke-width="0.61"/>
<line x1="1174.0" y1="736.5" x2="1128.7" y2="722.1" stroke="#fff" stroke-opacity="0.63" stroke-width="0.98"/>
<line x1="1128.7" y1="722.1" x2="1083.3" y2="707.7" stroke="#fff" stroke-opacity="0.60" stroke-width="0.97"/>
<line x1="1083.3" y1="707.7" x2="1038.0" y2="693.3" stroke="#fff" stroke-opacity="0.58" stroke-width="0.97"/>
<line x1="1038.0" y1="693.3" x2="992.7" y2="678.9" stroke="#fff" stroke-opacity="0.56" stroke-width="0.96"/>
<line x1="992.7" y1="678.9" x2="947.4" y2="664.5" stroke="#fff" stroke-opacity="0.53" stroke-width="0.95"/>
<line x1="947.4" y1="664.5" x2="902.1" y2="650.1" stroke="#fff" stroke-opacity="0.51" stroke-width="0.95"/>
<line x1="902.1" y1="650.1" x2="856.9" y2="635.8" stroke="#fff" stroke-opacity="0.49" stroke-width="0.94"/>
<line x1="856.9" y1="635.8" x2="811.6" y2="621.4" stroke="#fff" stroke-opacity="0.47" stroke-width="0.93"/>
<line x1="811.6" y1="621.4" x2="766.4" y2="607.0" stroke="#fff" stroke-opacity="0.44" stroke-width="0.92"/>
<line x1="766.4" y1="607.0" x2="721.2" y2="592.6" stroke="#fff" stroke-opacity="0.42" stroke-width="0.92"/>
<line x1="1196.3" y1="729.9" x2="1150.9" y2="715.4" stroke="#fff" stroke-opacity="0.20" stroke-width="0.65"/>
<line x1="1150.9" y1="715.4" x2="1105.6" y2="701.0" stroke="#fff" stroke-opacity="0.19" stroke-width="0.65"/>
<line x1="1105.6" y1="701.0" x2="1060.3" y2="686.6" stroke="#fff" stroke-opacity="0.18" stroke-width="0.64"/>
<line x1="1060.3" y1="686.6" x2="1014.9" y2="672.3" stroke="#fff" stroke-opacity="0.17" stroke-width="0.64"/>
<line x1="1014.9" y1="672.3" x2="969.6" y2="657.9" stroke="#fff" stroke-opacity="0.17" stroke-width="0.63"/>
<line x1="969.6" y1="657.9" x2="924.4" y2="643.5" stroke="#fff" stroke-opacity="0.16" stroke-width="0.63"/>
<line x1="924.4" y1="643.5" x2="879.1" y2="629.1" stroke="#fff" stroke-opacity="0.15" stroke-width="0.62"/>
<line x1="879.1" y1="629.1" x2="833.8" y2="614.7" stroke="#fff" stroke-opacity="0.14" stroke-width="0.62"/>
<line x1="833.8" y1="614.7" x2="788.6" y2="600.3" stroke="#fff" stroke-opacity="0.14" stroke-width="0.61"/>
<line x1="788.6" y1="600.3" x2="743.4" y2="586.0" stroke="#fff" stroke-opacity="0.13" stroke-width="0.61"/>
<line x1="1218.5" y1="723.2" x2="1173.2" y2="708.8" stroke="#fff" stroke-opacity="0.19" stroke-width="0.65"/>
<line x1="1173.2" y1="708.8" x2="1127.8" y2="694.4" stroke="#fff" stroke-opacity="0.18" stroke-width="0.64"/>
<line x1="1127.8" y1="694.4" x2="1082.5" y2="680.0" stroke="#fff" stroke-opacity="0.18" stroke-width="0.64"/>
<line x1="1082.5" y1="680.0" x2="1037.2" y2="665.6" stroke="#fff" stroke-opacity="0.17" stroke-width="0.64"/>
<line x1="1037.2" y1="665.6" x2="991.9" y2="651.2" stroke="#fff" stroke-opacity="0.16" stroke-width="0.63"/>
<line x1="991.9" y1="651.2" x2="946.6" y2="636.8" stroke="#fff" stroke-opacity="0.16" stroke-width="0.63"/>
<line x1="946.6" y1="636.8" x2="901.3" y2="622.4" stroke="#fff" stroke-opacity="0.15" stroke-width="0.62"/>
<line x1="901.3" y1="622.4" x2="856.1" y2="608.1" stroke="#fff" stroke-opacity="0.14" stroke-width="0.62"/>
<line x1="856.1" y1="608.1" x2="810.8" y2="593.7" stroke="#fff" stroke-opacity="0.13" stroke-width="0.61"/>
<line x1="810.8" y1="593.7" x2="765.6" y2="579.3" stroke="#fff" stroke-opacity="0.13" stroke-width="0.61"/>
<line x1="1240.7" y1="716.5" x2="1195.4" y2="702.1" stroke="#fff" stroke-opacity="0.19" stroke-width="0.65"/>
<line x1="1195.4" y1="702.1" x2="1150.0" y2="687.7" stroke="#fff" stroke-opacity="0.18" stroke-width="0.64"/>
<line x1="1150.0" y1="687.7" x2="1104.7" y2="673.3" stroke="#fff" stroke-opacity="0.17" stroke-width="0.64"/>
<line x1="1104.7" y1="673.3" x2="1059.4" y2="658.9" stroke="#fff" stroke-opacity="0.17" stroke-width="0.63"/>
<line x1="1059.4" y1="658.9" x2="1014.1" y2="644.5" stroke="#fff" stroke-opacity="0.16" stroke-width="0.63"/>
<line x1="1014.1" y1="644.5" x2="968.8" y2="630.1" stroke="#fff" stroke-opacity="0.15" stroke-width="0.62"/>
<line x1="968.8" y1="630.1" x2="923.5" y2="615.8" stroke="#fff" stroke-opacity="0.15" stroke-width="0.62"/>
<line x1="923.5" y1="615.8" x2="878.3" y2="601.4" stroke="#fff" stroke-opacity="0.14" stroke-width="0.61"/>
<line x1="878.3" y1="601.4" x2="833.0" y2="587.0" stroke="#fff" stroke-opacity="0.13" stroke-width="0.61"/>
<line x1="833.0" y1="587.0" x2="787.8" y2="572.7" stroke="#fff" stroke-opacity="0.12" stroke-width="0.60"/>
<line x1="1263.0" y1="709.8" x2="1217.6" y2="695.4" stroke="#fff" stroke-opacity="0.19" stroke-width="0.65"/>
<line x1="1217.6" y1="695.4" x2="1172.3" y2="681.0" stroke="#fff" stroke-opacity="0.18" stroke-width="0.64"/>
<line x1="1172.3" y1="681.0" x2="1126.9" y2="666.6" stroke="#fff" stroke-opacity="0.17" stroke-width="0.64"/>
<line x1="1126.9" y1="666.6" x2="1081.6" y2="652.2" stroke="#fff" stroke-opacity="0.16" stroke-width="0.63"/>
<line x1="1081.6" y1="652.2" x2="1036.3" y2="637.8" stroke="#fff" stroke-opacity="0.16" stroke-width="0.63"/>
<line x1="1036.3" y1="637.8" x2="991.0" y2="623.5" stroke="#fff" stroke-opacity="0.15" stroke-width="0.62"/>
<line x1="991.0" y1="623.5" x2="945.8" y2="609.1" stroke="#fff" stroke-opacity="0.14" stroke-width="0.62"/>
<line x1="945.8" y1="609.1" x2="900.5" y2="594.7" stroke="#fff" stroke-opacity="0.13" stroke-width="0.61"/>
<line x1="900.5" y1="594.7" x2="855.3" y2="580.4" stroke="#fff" stroke-opacity="0.13" stroke-width="0.61"/>
<line x1="855.3" y1="580.4" x2="810.0" y2="566.0" stroke="#fff" stroke-opacity="0.12" stroke-width="0.60"/>
<line x1="1285.2" y1="703.1" x2="1239.9" y2="688.7" stroke="#fff" stroke-opacity="0.57" stroke-width="0.96"/>
<line x1="1239.9" y1="688.7" x2="1194.5" y2="674.3" stroke="#fff" stroke-opacity="0.55" stroke-width="0.96"/>
<line x1="1194.5" y1="674.3" x2="1149.2" y2="659.9" stroke="#fff" stroke-opacity="0.53" stroke-width="0.95"/>
<line x1="1149.2" y1="659.9" x2="1103.9" y2="645.6" stroke="#fff" stroke-opacity="0.50" stroke-width="0.94"/>
<line x1="1103.9" y1="645.6" x2="1058.5" y2="631.2" stroke="#fff" stroke-opacity="0.48" stroke-width="0.94"/>
<line x1="1058.5" y1="631.2" x2="1013.3" y2="616.8" stroke="#fff" stroke-opacity="0.46" stroke-width="0.93"/>
<line x1="1013.3" y1="616.8" x2="968.0" y2="602.4" stroke="#fff" stroke-opacity="0.44" stroke-width="0.92"/>
<line x1="968.0" y1="602.4" x2="922.7" y2="588.1" stroke="#fff" stroke-opacity="0.41" stroke-width="0.92"/>
<line x1="922.7" y1="588.1" x2="877.5" y2="573.7" stroke="#fff" stroke-opacity="0.39" stroke-width="0.91"/>
<line x1="877.5" y1="573.7" x2="832.2" y2="559.3" stroke="#fff" stroke-opacity="0.37" stroke-width="0.90"/>
<line x1="729.0" y1="870.2" x2="784.6" y2="853.5" stroke="#fff" stroke-opacity="0.84" stroke-width="1.05"/>
<line x1="784.6" y1="853.5" x2="840.3" y2="836.8" stroke="#fff" stroke-opacity="0.81" stroke-width="1.04"/>
<line x1="840.3" y1="836.8" x2="895.9" y2="820.1" stroke="#fff" stroke-opacity="0.78" stroke-width="1.03"/>
<line x1="895.9" y1="820.1" x2="951.6" y2="803.4" stroke="#fff" stroke-opacity="0.76" stroke-width="1.02"/>
<line x1="951.6" y1="803.4" x2="1007.2" y2="786.7" stroke="#fff" stroke-opacity="0.73" stroke-width="1.01"/>
<line x1="1007.2" y1="786.7" x2="1062.8" y2="769.9" stroke="#fff" stroke-opacity="0.70" stroke-width="1.00"/>
<line x1="1062.8" y1="769.9" x2="1118.4" y2="753.2" stroke="#fff" stroke-opacity="0.68" stroke-width="1.00"/>
<line x1="1118.4" y1="753.2" x2="1174.0" y2="736.5" stroke="#fff" stroke-opacity="0.65" stroke-width="0.99"/>
<line x1="1174.0" y1="736.5" x2="1229.6" y2="719.8" stroke="#fff" stroke-opacity="0.62" stroke-width="0.98"/>
<line x1="1229.6" y1="719.8" x2="1285.2" y2="703.1" stroke="#fff" stroke-opacity="0.60" stroke-width="0.97"/>
<line x1="718.2" y1="866.8" x2="773.8" y2="850.1" stroke="#fff" stroke-opacity="0.83" stroke-width="1.04"/>
<line x1="773.8" y1="850.1" x2="829.5" y2="833.4" stroke="#fff" stroke-opacity="0.81" stroke-width="1.04"/>
<line x1="829.5" y1="833.4" x2="885.1" y2="816.6" stroke="#fff" stroke-opacity="0.78" stroke-width="1.03"/>
<line x1="885.1" y1="816.6" x2="940.8" y2="799.9" stroke="#fff" stroke-opacity="0.75" stroke-width="1.02"/>
<line x1="940.8" y1="799.9" x2="996.4" y2="783.2" stroke="#fff" stroke-opacity="0.73" stroke-width="1.01"/>
<line x1="996.4" y1="783.2" x2="1052.0" y2="766.5" stroke="#fff" stroke-opacity="0.70" stroke-width="1.00"/>
<line x1="1052.0" y1="766.5" x2="1107.6" y2="749.8" stroke="#fff" stroke-opacity="0.67" stroke-width="1.00"/>
<line x1="1107.6" y1="749.8" x2="1163.2" y2="733.1" stroke="#fff" stroke-opacity="0.65" stroke-width="0.99"/>
<line x1="1163.2" y1="733.1" x2="1218.8" y2="716.4" stroke="#fff" stroke-opacity="0.62" stroke-width="0.98"/>
<line x1="1218.8" y1="716.4" x2="1274.4" y2="699.7" stroke="#fff" stroke-opacity="0.59" stroke-width="0.97"/>
<line x1="696.6" y1="859.9" x2="752.3" y2="843.2" stroke="#fff" stroke-opacity="0.26" stroke-width="0.69"/>
<line x1="752.3" y1="843.2" x2="807.9" y2="826.5" stroke="#fff" stroke-opacity="0.25" stroke-width="0.69"/>
<line x1="807.9" y1="826.5" x2="863.6" y2="809.8" stroke="#fff" stroke-opacity="0.24" stroke-width="0.68"/>
<line x1="863.6" y1="809.8" x2="919.2" y2="793.1" stroke="#fff" stroke-opacity="0.24" stroke-width="0.68"/>
<line x1="919.2" y1="793.1" x2="974.8" y2="776.4" stroke="#fff" stroke-opacity="0.23" stroke-width="0.67"/>
<line x1="974.8" y1="776.4" x2="1030.4" y2="759.6" stroke="#fff" stroke-opacity="0.22" stroke-width="0.67"/>
<line x1="1030.4" y1="759.6" x2="1086.0" y2="742.9" stroke="#fff" stroke-opacity="0.21" stroke-width="0.66"/>
<line x1="1086.0" y1="742.9" x2="1141.6" y2="726.2" stroke="#fff" stroke-opacity="0.20" stroke-width="0.66"/>
<line x1="1141.6" y1="726.2" x2="1197.2" y2="709.5" stroke="#fff" stroke-opacity="0.19" stroke-width="0.65"/>
<line x1="1197.2" y1="709.5" x2="1252.8" y2="692.9" stroke="#fff" stroke-opacity="0.18" stroke-width="0.64"/>
<line x1="675.0" y1="853.1" x2="730.7" y2="836.3" stroke="#fff" stroke-opacity="0.26" stroke-width="0.69"/>
<line x1="730.7" y1="836.3" x2="786.3" y2="819.6" stroke="#fff" stroke-opacity="0.25" stroke-width="0.69"/>
<line x1="786.3" y1="819.6" x2="842.0" y2="802.9" stroke="#fff" stroke-opacity="0.24" stroke-width="0.68"/>
<line x1="842.0" y1="802.9" x2="897.6" y2="786.2" stroke="#fff" stroke-opacity="0.23" stroke-width="0.68"/>
<line x1="897.6" y1="786.2" x2="953.2" y2="769.5" stroke="#fff" stroke-opacity="0.22" stroke-width="0.67"/>
<line x1="953.2" y1="769.5" x2="1008.8" y2="752.8" stroke="#fff" stroke-opacity="0.22" stroke-width="0.66"/>
<line x1="1008.8" y1="752.8" x2="1064.5" y2="736.1" stroke="#fff" stroke-opacity="0.21" stroke-width="0.66"/>
<line x1="1064.5" y1="736.1" x2="1120.0" y2="719.4" stroke="#fff" stroke-opacity="0.20" stroke-width="0.65"/>
<line x1="1120.0" y1="719.4" x2="1175.6" y2="702.7" stroke="#fff" stroke-opacity="0.19" stroke-width="0.65"/>
<line x1="1175.6" y1="702.7" x2="1231.2" y2="686.0" stroke="#fff" stroke-opacity="0.18" stroke-width="0.64"/>
<line x1="653.4" y1="846.2" x2="709.1" y2="829.5" stroke="#fff" stroke-opacity="0.25" stroke-width="0.69"/>
<line x1="709.1" y1="829.5" x2="764.8" y2="812.7" stroke="#fff" stroke-opacity="0.25" stroke-width="0.68"/>
<line x1="764.8" y1="812.7" x2="820.4" y2="796.0" stroke="#fff" stroke-opacity="0.24" stroke-width="0.68"/>
<line x1="820.4" y1="796.0" x2="876.0" y2="779.3" stroke="#fff" stroke-opacity="0.23" stroke-width="0.67"/>
<line x1="876.0" y1="779.3" x2="931.6" y2="762.6" stroke="#fff" stroke-opacity="0.22" stroke-width="0.67"/>
<line x1="931.6" y1="762.6" x2="987.3" y2="745.9" stroke="#fff" stroke-opacity="0.21" stroke-width="0.66"/>
<line x1="987.3" y1="745.9" x2="1042.9" y2="729.2" stroke="#fff" stroke-opacity="0.20" stroke-width="0.66"/>
<line x1="1042.9" y1="729.2" x2="1098.5" y2="712.5" stroke="#fff" stroke-opacity="0.19" stroke-width="0.65"/>
<line x1="1098.5" y1="712.5" x2="1154.0" y2="695.8" stroke="#fff" stroke-opacity="0.19" stroke-width="0.65"/>
<line x1="1154.0" y1="695.8" x2="1209.6" y2="679.1" stroke="#fff" stroke-opacity="0.18" stroke-width="0.64"/>
<line x1="631.9" y1="839.3" x2="687.5" y2="822.6" stroke="#fff" stroke-opacity="0.25" stroke-width="0.69"/>
<line x1="687.5" y1="822.6" x2="743.2" y2="805.9" stroke="#fff" stroke-opacity="0.24" stroke-width="0.68"/>
<line x1="743.2" y1="805.9" x2="798.8" y2="789.2" stroke="#fff" stroke-opacity="0.23" stroke-width="0.68"/>
<line x1="798.8" y1="789.2" x2="854.4" y2="772.5" stroke="#fff" stroke-opacity="0.22" stroke-width="0.67"/>
<line x1="854.4" y1="772.5" x2="910.1" y2="755.8" stroke="#fff" stroke-opacity="0.22" stroke-width="0.67"/>
<line x1="910.1" y1="755.8" x2="965.7" y2="739.1" stroke="#fff" stroke-opacity="0.21" stroke-width="0.66"/>
<line x1="965.7" y1="739.1" x2="1021.3" y2="722.4" stroke="#fff" stroke-opacity="0.20" stroke-width="0.65"/>
<line x1="1021.3" y1="722.4" x2="1076.9" y2="705.7" stroke="#fff" stroke-opacity="0.19" stroke-width="0.65"/>
<line x1="1076.9" y1="705.7" x2="1132.5" y2="689.0" stroke="#fff" stroke-opacity="0.18" stroke-width="0.64"/>
<line x1="1132.5" y1="689.0" x2="1188.0" y2="672.3" stroke="#fff" stroke-opacity="0.17" stroke-width="0.64"/>
<line x1="610.3" y1="832.4" x2="666.0" y2="815.7" stroke="#fff" stroke-opacity="0.78" stroke-width="1.03"/>
<line x1="666.0" y1="815.7" x2="721.6" y2="799.0" stroke="#fff" stroke-opacity="0.75" stroke-width="1.02"/>
<line x1="721.6" y1="799.0" x2="777.2" y2="782.3" stroke="#fff" stroke-opacity="0.72" stroke-width="1.01"/>
<line x1="777.2" y1="782.3" x2="832.9" y2="765.6" stroke="#fff" stroke-opacity="0.70" stroke-width="1.00"/>
<line x1="832.9" y1="765.6" x2="888.5" y2="748.9" stroke="#fff" stroke-opacity="0.67" stroke-width="0.99"/>
<line x1="888.5" y1="748.9" x2="944.1" y2="732.2" stroke="#fff" stroke-opacity="0.64" stroke-width="0.99"/>
<line x1="944.1" y1="732.2" x2="999.7" y2="715.5" stroke="#fff" stroke-opacity="0.62" stroke-width="0.98"/>
<line x1="999.7" y1="715.5" x2="1055.3" y2="698.8" stroke="#fff" stroke-opacity="0.59" stroke-width="0.97"/>
<line x1="1055.3" y1="698.8" x2="1110.9" y2="682.1" stroke="#fff" stroke-opacity="0.56" stroke-width="0.96"/>
<line x1="1110.9" y1="682.1" x2="1166.4" y2="665.4" stroke="#fff" stroke-opacity="0.54" stroke-width="0.95"/>
<line x1="588.8" y1="825.6" x2="644.4" y2="808.8" stroke="#fff" stroke-opacity="0.24" stroke-width="0.68"/>
<line x1="644.4" y1="808.8" x2="700.0" y2="792.1" stroke="#fff" stroke-opacity="0.23" stroke-width="0.68"/>
<line x1="700.0" y1="792.1" x2="755.7" y2="775.4" stroke="#fff" stroke-opacity="0.23" stroke-width="0.67"/>
<line x1="755.7" y1="775.4" x2="811.3" y2="758.7" stroke="#fff" stroke-opacity="0.22" stroke-width="0.67"/>
<line x1="811.3" y1="758.7" x2="866.9" y2="742.0" stroke="#fff" stroke-opacity="0.21" stroke-width="0.66"/>
<line x1="866.9" y1="742.0" x2="922.5" y2="725.3" stroke="#fff" stroke-opacity="0.20" stroke-width="0.66"/>
<line x1="922.5" y1="725.3" x2="978.1" y2="708.6" stroke="#fff" stroke-opacity="0.19" stroke-width="0.65"/>
<line x1="978.1" y1="708.6" x2="1033.7" y2="692.0" stroke="#fff" stroke-opacity="0.18" stroke-width="0.64"/>
<line x1="1033.7" y1="692.0" x2="1089.3" y2="675.3" stroke="#fff" stroke-opacity="0.18" stroke-width="0.64"/>
<line x1="1089.3" y1="675.3" x2="1144.9" y2="658.6" stroke="#fff" stroke-opacity="0.17" stroke-width="0.63"/>
<line x1="567.2" y1="818.7" x2="622.8" y2="802.0" stroke="#fff" stroke-opacity="0.24" stroke-width="0.68"/>
<line x1="622.8" y1="802.0" x2="678.5" y2="785.3" stroke="#fff" stroke-opacity="0.23" stroke-width="0.67"/>
<line x1="678.5" y1="785.3" x2="734.1" y2="768.6" stroke="#fff" stroke-opacity="0.22" stroke-width="0.67"/>
<line x1="734.1" y1="768.6" x2="789.7" y2="751.9" stroke="#fff" stroke-opacity="0.21" stroke-width="0.66"/>
<line x1="789.7" y1="751.9" x2="845.3" y2="735.2" stroke="#fff" stroke-opacity="0.21" stroke-width="0.66"/>
<line x1="845.3" y1="735.2" x2="901.0" y2="718.5" stroke="#fff" stroke-opacity="0.20" stroke-width="0.65"/>
<line x1="901.0" y1="718.5" x2="956.5" y2="701.8" stroke="#fff" stroke-opacity="0.19" stroke-width="0.65"/>
<line x1="956.5" y1="701.8" x2="1012.1" y2="685.1" stroke="#fff" stroke-opacity="0.18" stroke-width="0.64"/>
<line x1="1012.1" y1="685.1" x2="1067.7" y2="668.4" stroke="#fff" stroke-opacity="0.17" stroke-width="0.64"/>
<line x1="1067.7" y1="668.4" x2="1123.3" y2="651.7" stroke="#fff" stroke-opacity="0.16" stroke-width="0.63"/>
<line x1="545.6" y1="811.8" x2="601.3" y2="795.1" stroke="#fff" stroke-opacity="0.24" stroke-width="0.68"/>
<line x1="601.3" y1="795.1" x2="656.9" y2="778.4" stroke="#fff" stroke-opacity="0.23" stroke-width="0.67"/>
<line x1="656.9" y1="778.4" x2="712.6" y2="761.7" stroke="#fff" stroke-opacity="0.22" stroke-width="0.67"/>
<line x1="712.6" y1="761.7" x2="768.2" y2="745.0" stroke="#fff" stroke-opacity="0.21" stroke-width="0.66"/>
<line x1="768.2" y1="745.0" x2="823.8" y2="728.3" stroke="#fff" stroke-opacity="0.20" stroke-width="0.66"/>
<line x1="823.8" y1="728.3" x2="879.4" y2="711.6" stroke="#fff" stroke-opacity="0.19" stroke-width="0.65"/>
<line x1="879.4" y1="711.6" x2="935.0" y2="694.9" stroke="#fff" stroke-opacity="0.19" stroke-width="0.65"/>
<line x1="935.0" y1="694.9" x2="990.6" y2="678.2" stroke="#fff" stroke-opacity="0.18" stroke-width="0.64"/>
<line x1="990.6" y1="678.2" x2="1046.1" y2="661.6" stroke="#fff" stroke-opacity="0.17" stroke-width="0.63"/>
<line x1="1046.1" y1="661.6" x2="1101.7" y2="644.9" stroke="#fff" stroke-opacity="0.16" stroke-width="0.63"/>
<line x1="524.1" y1="805.0" x2="579.7" y2="788.2" stroke="#fff" stroke-opacity="0.23" stroke-width="0.68"/>
<line x1="579.7" y1="788.2" x2="635.4" y2="771.5" stroke="#fff" stroke-opacity="0.22" stroke-width="0.67"/>
<line x1="635.4" y1="771.5" x2="691.0" y2="754.8" stroke="#fff" stroke-opacity="0.22" stroke-width="0.67"/>
<line x1="691.0" y1="754.8" x2="746.6" y2="738.1" stroke="#fff" stroke-opacity="0.21" stroke-width="0.66"/>
<line x1="746.6" y1="738.1" x2="802.2" y2="721.5" stroke="#fff" stroke-opacity="0.20" stroke-width="0.65"/>
<line x1="802.2" y1="721.5" x2="857.8" y2="704.8" stroke="#fff" stroke-opacity="0.19" stroke-width="0.65"/>
<line x1="857.8" y1="704.8" x2="913.4" y2="688.1" stroke="#fff" stroke-opacity="0.18" stroke-width="0.64"/>
<line x1="913.4" y1="688.1" x2="969.0" y2="671.4" stroke="#fff" stroke-opacity="0.17" stroke-width="0.64"/>
<line x1="969.0" y1="671.4" x2="1024.6" y2="654.7" stroke="#fff" stroke-opacity="0.17" stroke-width="0.63"/>
<line x1="1024.6" y1="654.7" x2="1080.1" y2="638.0" stroke="#fff" stroke-opacity="0.16" stroke-width="0.63"/>
<line x1="502.5" y1="798.1" x2="558.2" y2="781.4" stroke="#fff" stroke-opacity="0.72" stroke-width="1.01"/>
<line x1="558.2" y1="781.4" x2="613.8" y2="764.7" stroke="#fff" stroke-opacity="0.70" stroke-width="1.00"/>
<line x1="613.8" y1="764.7" x2="669.4" y2="748.0" stroke="#fff" stroke-opacity="0.67" stroke-width="0.99"/>
<line x1="669.4" y1="748.0" x2="725.1" y2="731.3" stroke="#fff" stroke-opacity="0.64" stroke-width="0.99"/>
<line x1="725.1" y1="731.3" x2="780.7" y2="714.6" stroke="#fff" stroke-opacity="0.62" stroke-width="0.98"/>
<line x1="780.7" y1="714.6" x2="836.3" y2="697.9" stroke="#fff" stroke-opacity="0.59" stroke-width="0.97"/>
<line x1="836.3" y1="697.9" x2="891.8" y2="681.2" stroke="#fff" stroke-opacity="0.56" stroke-width="0.96"/>
<line x1="891.8" y1="681.2" x2="947.4" y2="664.5" stroke="#fff" stroke-opacity="0.54" stroke-width="0.95"/>
<line x1="947.4" y1="664.5" x2="1003.0" y2="647.9" stroke="#fff" stroke-opacity="0.51" stroke-width="0.94"/>
<line x1="1003.0" y1="647.9" x2="1058.5" y2="631.2" stroke="#fff" stroke-opacity="0.48" stroke-width="0.94"/>
<line x1="481.0" y1="791.2" x2="536.6" y2="774.5" stroke="#fff" stroke-opacity="0.23" stroke-width="0.67"/>
<line x1="536.6" y1="774.5" x2="592.3" y2="757.8" stroke="#fff" stroke-opacity="0.22" stroke-width="0.67"/>
<line x1="592.3" y1="757.8" x2="647.9" y2="741.1" stroke="#fff" stroke-opacity="0.21" stroke-width="0.66"/>
<line x1="647.9" y1="741.1" x2="703.5" y2="724.4" stroke="#fff" stroke-opacity="0.20" stroke-width="0.66"/>
<line x1="703.5" y1="724.4" x2="759.1" y2="707.7" stroke="#fff" stroke-opacity="0.19" stroke-width="0.65"/>
<line x1="759.1" y1="707.7" x2="814.7" y2="691.1" stroke="#fff" stroke-opacity="0.18" stroke-width="0.64"/>
<line x1="814.7" y1="691.1" x2="870.3" y2="674.4" stroke="#fff" stroke-opacity="0.18" stroke-width="0.64"/>
<line x1="870.3" y1="674.4" x2="925.9" y2="657.7" stroke="#fff" stroke-opacity="0.17" stroke-width="0.63"/>
<line x1="925.9" y1="657.7" x2="981.4" y2="641.0" stroke="#fff" stroke-opacity="0.16" stroke-width="0.63"/>
<line x1="981.4" y1="641.0" x2="1037.0" y2="624.3" stroke="#fff" stroke-opacity="0.15" stroke-width="0.62"/>
<line x1="459.5" y1="784.4" x2="515.1" y2="767.7" stroke="#fff" stroke-opacity="0.22" stroke-width="0.67"/>
<line x1="515.1" y1="767.7" x2="570.7" y2="751.0" stroke="#fff" stroke-opacity="0.21" stroke-width="0.66"/>
<line x1="570.7" y1="751.0" x2="626.3" y2="734.3" stroke="#fff" stroke-opacity="0.21" stroke-width="0.66"/>
<line x1="626.3" y1="734.3" x2="681.9" y2="717.6" stroke="#fff" stroke-opacity="0.20" stroke-width="0.65"/>
<line x1="681.9" y1="717.6" x2="737.6" y2="700.9" stroke="#fff" stroke-opacity="0.19" stroke-width="0.65"/>
<line x1="737.6" y1="700.9" x2="793.1" y2="684.2" stroke="#fff" stroke-opacity="0.18" stroke-width="0.64"/>
<line x1="793.1" y1="684.2" x2="848.7" y2="667.5" stroke="#fff" stroke-opacity="0.17" stroke-width="0.64"/>
<line x1="848.7" y1="667.5" x2="904.3" y2="650.8" stroke="#fff" stroke-opacity="0.16" stroke-width="0.63"/>
<line x1="904.3" y1="650.8" x2="959.9" y2="634.2" stroke="#fff" stroke-opacity="0.16" stroke-width="0.63"/>
<line x1="959.9" y1="634.2" x2="1015.4" y2="617.5" stroke="#fff" stroke-opacity="0.15" stroke-width="0.62"/>
<line x1="437.9" y1="777.5" x2="493.6" y2="760.8" stroke="#fff" stroke-opacity="0.22" stroke-width="0.67"/>
<line x1="493.6" y1="760.8" x2="549.2" y2="744.1" stroke="#fff" stroke-opacity="0.21" stroke-width="0.66"/>
<line x1="549.2" y1="744.1" x2="604.8" y2="727.4" stroke="#fff" stroke-opacity="0.20" stroke-width="0.66"/>
<line x1="604.8" y1="727.4" x2="660.4" y2="710.7" stroke="#fff" stroke-opacity="0.19" stroke-width="0.65"/>
<line x1="660.4" y1="710.7" x2="716.0" y2="694.0" stroke="#fff" stroke-opacity="0.19" stroke-width="0.65"/>
<line x1="716.0" y1="694.0" x2="771.6" y2="677.3" stroke="#fff" stroke-opacity="0.18" stroke-width="0.64"/>
<line x1="771.6" y1="677.3" x2="827.2" y2="660.7" stroke="#fff" stroke-opacity="0.17" stroke-width="0.63"/>
<line x1="827.2" y1="660.7" x2="882.7" y2="644.0" stroke="#fff" stroke-opacity="0.16" stroke-width="0.63"/>
<line x1="882.7" y1="644.0" x2="938.3" y2="627.3" stroke="#fff" stroke-opacity="0.15" stroke-width="0.62"/>
<line x1="938.3" y1="627.3" x2="993.9" y2="610.6" stroke="#fff" stroke-opacity="0.14" stroke-width="0.62"/>
<line x1="416.4" y1="770.6" x2="472.0" y2="753.9" stroke="#fff" stroke-opacity="0.22" stroke-width="0.66"/>
<line x1="472.0" y1="753.9" x2="527.6" y2="737.2" stroke="#fff" stroke-opacity="0.21" stroke-width="0.66"/>
<line x1="527.6" y1="737.2" x2="583.3" y2="720.5" stroke="#fff" stroke-opacity="0.20" stroke-width="0.65"/>
<line x1="583.3" y1="720.5" x2="638.9" y2="703.9" stroke="#fff" stroke-opacity="0.19" stroke-width="0.65"/>
<line x1="638.9" y1="703.9" x2="694.5" y2="687.2" stroke="#fff" stroke-opacity="0.18" stroke-width="0.64"/>
<line x1="694.5" y1="687.2" x2="750.0" y2="670.5" stroke="#fff" stroke-opacity="0.17" stroke-width="0.64"/>
<line x1="750.0" y1="670.5" x2="805.6" y2="653.8" stroke="#fff" stroke-opacity="0.17" stroke-width="0.63"/>
<line x1="805.6" y1="653.8" x2="861.2" y2="637.1" stroke="#fff" stroke-opacity="0.16" stroke-width="0.63"/>
<line x1="861.2" y1="637.1" x2="916.7" y2="620.5" stroke="#fff" stroke-opacity="0.15" stroke-width="0.62"/>
<line x1="916.7" y1="620.5" x2="972.3" y2="603.8" stroke="#fff" stroke-opacity="0.14" stroke-width="0.62"/>
<line x1="394.9" y1="763.8" x2="450.5" y2="747.1" stroke="#fff" stroke-opacity="0.67" stroke-width="0.99"/>
<line x1="450.5" y1="747.1" x2="506.1" y2="730.4" stroke="#fff" stroke-opacity="0.64" stroke-width="0.99"/>
<line x1="506.1" y1="730.4" x2="561.7" y2="713.7" stroke="#fff" stroke-opacity="0.61" stroke-width="0.98"/>
<line x1="561.7" y1="713.7" x2="617.3" y2="697.0" stroke="#fff" stroke-opacity="0.59" stroke-width="0.97"/>
<line x1="617.3" y1="697.0" x2="672.9" y2="680.3" stroke="#fff" stroke-opacity="0.56" stroke-width="0.96"/>
<line x1="672.9" y1="680.3" x2="728.5" y2="663.6" stroke="#fff" stroke-opacity="0.54" stroke-width="0.95"/>
<line x1="728.5" y1="663.6" x2="784.1" y2="647.0" stroke="#fff" stroke-opacity="0.51" stroke-width="0.94"/>
<line x1="784.1" y1="647.0" x2="839.6" y2="630.3" stroke="#fff" stroke-opacity="0.48" stroke-width="0.94"/>
<line x1="839.6" y1="630.3" x2="895.2" y2="613.6" stroke="#fff" stroke-opacity="0.46" stroke-width="0.93"/>
<line x1="895.2" y1="613.6" x2="950.7" y2="596.9" stroke="#fff" stroke-opacity="0.43" stroke-width="0.92"/>
<line x1="373.3" y1="756.9" x2="428.9" y2="740.2" stroke="#fff" stroke-opacity="0.21" stroke-width="0.66"/>
<line x1="428.9" y1="740.2" x2="484.6" y2="723.5" stroke="#fff" stroke-opacity="0.20" stroke-width="0.65"/>
<line x1="484.6" y1="723.5" x2="540.2" y2="706.8" stroke="#fff" stroke-opacity="0.19" stroke-width="0.65"/>
<line x1="540.2" y1="706.8" x2="595.8" y2="690.2" stroke="#fff" stroke-opacity="0.18" stroke-width="0.64"/>
<line x1="595.8" y1="690.2" x2="651.4" y2="673.5" stroke="#fff" stroke-opacity="0.17" stroke-width="0.64"/>
<line x1="651.4" y1="673.5" x2="707.0" y2="656.8" stroke="#fff" stroke-opacity="0.17" stroke-width="0.63"/>
<line x1="707.0" y1="656.8" x2="762.5" y2="640.1" stroke="#fff" stroke-opacity="0.16" stroke-width="0.63"/>
<line x1="762.5" y1="640.1" x2="818.1" y2="623.4" stroke="#fff" stroke-opacity="0.15" stroke-width="0.62"/>
<line x1="818.1" y1="623.4" x2="873.6" y2="606.8" stroke="#fff" stroke-opacity="0.14" stroke-width="0.62"/>
<line x1="873.6" y1="606.8" x2="929.2" y2="590.1" stroke="#fff" stroke-opacity="0.13" stroke-width="0.61"/>
<line x1="351.8" y1="750.0" x2="407.4" y2="733.4" stroke="#fff" stroke-opacity="0.21" stroke-width="0.66"/>
<line x1="407.4" y1="733.4" x2="463.0" y2="716.7" stroke="#fff" stroke-opacity="0.20" stroke-width="0.65"/>
<line x1="463.0" y1="716.7" x2="518.6" y2="700.0" stroke="#fff" stroke-opacity="0.19" stroke-width="0.65"/>
<line x1="518.6" y1="700.0" x2="574.2" y2="683.3" stroke="#fff" stroke-opacity="0.18" stroke-width="0.64"/>
<line x1="574.2" y1="683.3" x2="629.8" y2="666.6" stroke="#fff" stroke-opacity="0.17" stroke-width="0.64"/>
<line x1="629.8" y1="666.6" x2="685.4" y2="649.9" stroke="#fff" stroke-opacity="0.16" stroke-width="0.63"/>
<line x1="685.4" y1="649.9" x2="741.0" y2="633.3" stroke="#fff" stroke-opacity="0.15" stroke-width="0.63"/>
<line x1="741.0" y1="633.3" x2="796.5" y2="616.6" stroke="#fff" stroke-opacity="0.15" stroke-width="0.62"/>
<line x1="796.5" y1="616.6" x2="852.1" y2="599.9" stroke="#fff" stroke-opacity="0.14" stroke-width="0.61"/>
<line x1="852.1" y1="599.9" x2="907.6" y2="583.3" stroke="#fff" stroke-opacity="0.13" stroke-width="0.61"/>
<line x1="330.3" y1="743.2" x2="385.9" y2="726.5" stroke="#fff" stroke-opacity="0.20" stroke-width="0.66"/>
<line x1="385.9" y1="726.5" x2="441.5" y2="709.8" stroke="#fff" stroke-opacity="0.19" stroke-width="0.65"/>
<line x1="441.5" y1="709.8" x2="497.1" y2="693.1" stroke="#fff" stroke-opacity="0.18" stroke-width="0.64"/>
<line x1="497.1" y1="693.1" x2="552.7" y2="676.4" stroke="#fff" stroke-opacity="0.18" stroke-width="0.64"/>
<line x1="552.7" y1="676.4" x2="608.3" y2="659.8" stroke="#fff" stroke-opacity="0.17" stroke-width="0.63"/>
<line x1="608.3" y1="659.8" x2="663.9" y2="643.1" stroke="#fff" stroke-opacity="0.16" stroke-width="0.63"/>
<line x1="663.9" y1="643.1" x2="719.4" y2="626.4" stroke="#fff" stroke-opacity="0.15" stroke-width="0.62"/>
<line x1="719.4" y1="626.4" x2="775.0" y2="609.8" stroke="#fff" stroke-opacity="0.14" stroke-width="0.62"/>
<line x1="775.0" y1="609.8" x2="830.6" y2="593.1" stroke="#fff" stroke-opacity="0.13" stroke-width="0.61"/>
<line x1="830.6" y1="593.1" x2="886.1" y2="576.4" stroke="#fff" stroke-opacity="0.13" stroke-width="0.61"/>
<line x1="308.8" y1="736.3" x2="364.4" y2="719.6" stroke="#fff" stroke-opacity="0.20" stroke-width="0.65"/>
<line x1="364.4" y1="719.6" x2="420.0" y2="703.0" stroke="#fff" stroke-opacity="0.19" stroke-width="0.65"/>
<line x1="420.0" y1="703.0" x2="475.6" y2="686.3" stroke="#fff" stroke-opacity="0.18" stroke-width="0.64"/>
<line x1="475.6" y1="686.3" x2="531.2" y2="669.6" stroke="#fff" stroke-opacity="0.17" stroke-width="0.64"/>
<line x1="531.2" y1="669.6" x2="586.8" y2="652.9" stroke="#fff" stroke-opacity="0.16" stroke-width="0.63"/>
<line x1="586.8" y1="652.9" x2="642.3" y2="636.2" stroke="#fff" stroke-opacity="0.16" stroke-width="0.63"/>
<line x1="642.3" y1="636.2" x2="697.9" y2="619.6" stroke="#fff" stroke-opacity="0.15" stroke-width="0.62"/>
<line x1="697.9" y1="619.6" x2="753.5" y2="602.9" stroke="#fff" stroke-opacity="0.14" stroke-width="0.62"/>
<line x1="753.5" y1="602.9" x2="809.0" y2="586.2" stroke="#fff" stroke-opacity="0.13" stroke-width="0.61"/>
<line x1="809.0" y1="586.2" x2="864.5" y2="569.6" stroke="#fff" stroke-opacity="0.12" stroke-width="0.60"/>
<line x1="287.2" y1="729.5" x2="342.9" y2="712.8" stroke="#fff" stroke-opacity="0.61" stroke-width="0.98"/>
<line x1="342.9" y1="712.8" x2="398.5" y2="696.1" stroke="#fff" stroke-opacity="0.59" stroke-width="0.97"/>
<line x1="398.5" y1="696.1" x2="454.1" y2="679.4" stroke="#fff" stroke-opacity="0.56" stroke-width="0.96"/>
<line x1="454.1" y1="679.4" x2="509.7" y2="662.7" stroke="#fff" stroke-opacity="0.53" stroke-width="0.95"/>
<line x1="509.7" y1="662.7" x2="565.2" y2="646.1" stroke="#fff" stroke-opacity="0.51" stroke-width="0.94"/>
<line x1="565.2" y1="646.1" x2="620.8" y2="629.4" stroke="#fff" stroke-opacity="0.48" stroke-width="0.94"/>
<line x1="620.8" y1="629.4" x2="676.4" y2="612.7" stroke="#fff" stroke-opacity="0.45" stroke-width="0.93"/>
<line x1="676.4" y1="612.7" x2="731.9" y2="596.1" stroke="#fff" stroke-opacity="0.43" stroke-width="0.92"/>
<line x1="731.9" y1="596.1" x2="787.5" y2="579.4" stroke="#fff" stroke-opacity="0.40" stroke-width="0.91"/>
<line x1="787.5" y1="579.4" x2="843.0" y2="562.7" stroke="#fff" stroke-opacity="0.37" stroke-width="0.90"/>
<line x1="276.5" y1="726.0" x2="332.1" y2="709.4" stroke="#fff" stroke-opacity="0.61" stroke-width="0.98"/>
<line x1="332.1" y1="709.4" x2="387.7" y2="692.7" stroke="#fff" stroke-opacity="0.58" stroke-width="0.97"/>
<line x1="387.7" y1="692.7" x2="443.3" y2="676.0" stroke="#fff" stroke-opacity="0.55" stroke-width="0.96"/>
<line x1="443.3" y1="676.0" x2="498.9" y2="659.3" stroke="#fff" stroke-opacity="0.53" stroke-width="0.95"/>
<line x1="498.9" y1="659.3" x2="554.5" y2="642.6" stroke="#fff" stroke-opacity="0.50" stroke-width="0.94"/>
<line x1="554.5" y1="642.6" x2="610.0" y2="626.0" stroke="#fff" stroke-opacity="0.48" stroke-width="0.93"/>
<line x1="610.0" y1="626.0" x2="665.6" y2="609.3" stroke="#fff" stroke-opacity="0.45" stroke-width="0.93"/>
<line x1="665.6" y1="609.3" x2="721.2" y2="592.6" stroke="#fff" stroke-opacity="0.42" stroke-width="0.92"/>
<line x1="721.2" y1="592.6" x2="776.7" y2="576.0" stroke="#fff" stroke-opacity="0.40" stroke-width="0.91"/>
<line x1="776.7" y1="576.0" x2="832.2" y2="559.3" stroke="#fff" stroke-opacity="0.37" stroke-width="0.90"/>
<text transform="matrix(2.2240,-0.6680,2.1589,0.6862,962.40,766.20)" font-family="'Liberation Sans',sans-serif" font-size="8.30" fill="#f4f4f4" stroke="#f4f4f4" stroke-width="0.18" textLength="98.0" lengthAdjust="spacingAndGlyphs">ORIGINAL PRUSA i3 MK3</text>
<text transform="matrix(2.2235,-0.6679,2.1595,0.6860,1117.78,730.34)" font-family="'Liberation Sans',sans-serif" font-size="6.90" fill="#f4f4f4" stroke="#f4f4f4" stroke-width="0.18" textLength="45.5" lengthAdjust="spacingAndGlyphs">by Josef Prusa</text>
<polyline points="737.5,872.5 958.8,805.5" fill="none" stroke="#3cb878" stroke-width="2" />
<polyline points="499.0,709.0 478.5,715.0 481.0,719.0 540.0,741.4 590.0,759.0 665.3,785.2 740.5,810.3 784.4,825.3 792.0,826.3 800.7,824.0 828.2,815.3 895.9,785.2 941.0,762.7 1009.0,732.5 1013.5,729.0 1014.0,724.0" fill="none" stroke="#16917d" stroke-width="1.6" stroke-linejoin="round"/>
<polyline points="785.4,655.0 778.8,657.2 696.0,671.3 669.6,676.0" fill="none" stroke="#16917d" stroke-width="1.5" />
<polygon points="498.2,655.0 498.2,710.0 486.0,715.6 622.5,758.0 628.0,752.0 575.0,732.0 549.0,717.0 526.0,700.0 510.0,683.0 501.0,670.0" fill="url(#gd)" />
<polygon points="500.0,612.0 640.0,640.0 640.0,722.0 500.0,700.0" fill="url(#gs)" />
<polygon points="548.3,424.7 558.4,422.2 667.0,650.0 650.3,649.0" fill="url(#oy)" />
<polygon points="667.0,650.0 657.5,669.0 656.5,663.0 650.3,648.5" fill="#cf6a2c" />
<path d="M492.2 418.3 L501.9 415.6 L508.1 417.8 L526.6 412.2 L524.4 421.9 L541.9 417.2 L540.0 426.9 L548.8 424.7 L657.2 663.0 L656.4 668.5 L644.2 668.5 L644.2 706.2 L658.3 711.8 L677.0 732.5 L673.0 738.0 L624.4 755.0 L601.8 745.7 L575.4 732.5 L549.0 717.5 L526.5 700.5 L510.5 683.6 L501.0 670.4 L495.4 659.0 L492.6 649.7 Z M506.7 624.2 L531.2 630.8 L534.0 617.7 L561.3 626.1 L561.3 693.0 L534.0 684.5 L531.2 670.4 L506.7 662.0 Z M575.4 646.8 L600.9 652.5 L602.7 639.3 L630.0 647.8 L630.0 714.6 L602.7 706.2 L600.9 693.0 L575.4 684.5 Z" fill="url(#oh)" fill-rule="evenodd"/>
<polygon points="644.2,668.5 656.4,671.3 664.0,659.0 668.6,660.0 668.6,719.3 658.3,711.8 644.2,706.2" fill="url(#gs)" />
<polygon points="515.5,415.6 526.6,412.2 524.4,421.9 515.5,424.5" fill="#c4621f" />
<polygon points="531.0,420.2 541.9,417.2 540.0,426.9 530.5,429.5" fill="#c4621f" />
<polygon points="495.0,418.0 501.9,415.8 507.0,417.8 500.0,420.0" fill="#d8352c" />
<polygon points="754.5,403.0 777.0,403.0 777.0,707.0 788.2,711.0 755.3,718.4" fill="url(#gd)" />
<polygon points="754.7,366.0 768.1,366.3 772.8,370.0 772.8,402.5 754.7,402.5" fill="url(#op)" />
<polygon points="696.9,369.4 697.0,712.9 699.5,716.5 704.7,719.5 712.0,720.8 719.8,721.3 726.0,723.6 733.0,724.6 743.0,724.2 751.8,722.7 754.0,720.5 754.7,717.6 754.7,366.0 751.3,365.0 731.3,354.7 728.1,354.4 728.1,358.4 710.0,359.1 709.4,361.9 700.6,366.3" fill="url(#oh)" />
<rect x="697" y="376" width="5" height="338" fill="#e58040" opacity="0.45"/>
<rect x="716" y="673" width="5.5" height="48" fill="#b85a24" opacity="0.4"/>
<rect x="722" y="674" width="6" height="49" fill="#f08a48" opacity="0.35"/>
<rect x="746" y="376" width="8.7" height="340" fill="#b85a24" opacity="0.3"/>
<polygon points="697.5,369.4 700.6,366.3 709.4,361.9 710.0,359.1 728.1,358.4 728.1,354.4 731.3,354.7 758.8,363.8 768.1,366.3 754.7,366.8 751.3,371.5 731.3,373.8 725.0,375.0 705.6,374.0" fill="#d9a03a" />
<polygon points="700.3,369.4 709.4,363.1 717.5,359.8 730.5,359.2 731.3,356.2 757.0,364.0 751.3,365.2 751.3,370.0 731.3,372.3 725.0,373.5 705.6,372.6" fill="url(#rs)" />
<ellipse cx="736.4" cy="668.5" rx="15" ry="5" fill="#d98a3a"/>
<ellipse cx="738" cy="669.5" rx="11" ry="3" fill="#e2403c"/>
<polygon points="785.0,424.0 785.0,660.3 777.9,662.8 874.4,699.1 889.4,700.4 954.6,700.0 954.6,560.0 938.4,544.3 852.7,447.3 833.9,440.7 829.7,403.1 802.4,394.6 797.7,429.5" fill="url(#gs)" />
<polygon points="785.0,424.0 785.0,510.0 855.0,512.0 900.0,528.0 938.4,544.3 852.7,447.3 833.9,440.7 829.7,403.1 802.4,394.6 797.7,429.5" fill="url(#gc)" />
<polygon points="802.4,300.5 829.7,309.0 834.4,347.6 842.9,351.3 842.9,384.3 791.1,368.3 791.1,334.4 798.6,337.2" fill="url(#gs)" />
<polygon points="956.8,332.5 962.4,328.7 973.7,339.0 983.1,354.0 990.7,376.7 996.3,403.0 1000.5,420.0 1006.2,467.0 1010.9,514.0 1012.8,570.6 1012.2,725.5 998.4,730.0 1000.5,589.5 1000.5,514.0 996.8,467.0 990.2,420.0 986.9,395.6 979.4,369.2 970.0,348.5" fill="url(#oc)" />
<path d="M785.4 277.9 L793.0 276.5 L956.8 332.5 L970.0 348.5 L979.4 369.2 L986.9 395.6 L992.6 425.7 L996.8 467.0 L1000.5 514.0 L1002.4 570.6 L1002.0 600.0 L994.9 570.6 L983.6 561.2 L926.2 543.3 L900.8 549.9 L938.4 544.3 L852.7 447.3 L833.9 440.7 L829.7 403.1 L802.4 394.6 L797.7 429.5 L783.6 424.7 L777.9 414.4 L777.9 346.6 L783.6 330.6 L777.9 328.7 L784.5 309.9 L777.9 308.0 L783.6 293.9 Z M802.4 300.5 L829.7 309.0 L834.4 347.6 L842.9 351.3 L842.9 384.3 L791.1 368.3 L791.1 334.4 L798.6 337.2 Z" fill="url(#oh)" fill-rule="evenodd"/>
<polygon points="787.0,277.0 793.0,275.5 962.4,328.7 957.5,332.3" fill="#d8383a" />
<polygon points="893.2,586.4 945.8,598.9 954.6,596.4 954.6,740.5 967.1,745.5 945.8,753.0 876.9,730.5 889.4,726.7" fill="url(#gs)" />
<polygon points="874.4,690.4 881.9,687.9 889.4,687.9 889.4,728.0 880.7,720.5 874.4,707.9" fill="#dc6f2f" />
<polygon points="954.4,590.0 959.0,568.7 983.6,561.2 994.9,570.6 1000.5,589.5 998.4,730.0 983.4,735.5 970.9,734.0 954.6,733.0" fill="url(#oh)" />
<polygon points="954.6,706.7 970.9,713.0 972.0,734.0 954.6,733.0" fill="#cf6a2c" />
<polygon points="939.4,598.9 953.5,590.4 954.6,601.0 946.0,604.5" fill="#008a00" />
<polygon points="899.8,550.9 891.3,576.3 893.2,583.8 939.4,598.9 953.5,590.4 959.1,568.7" fill="url(#ob)" />
<polygon points="900.8,549.9 926.2,543.3 983.6,561.2 959.1,568.7" fill="url(#rs)" />
<polyline points="900.8,549.9 926.2,543.3 983.6,561.2 959.1,568.7 900.8,549.9" fill="none" stroke="#d98a3a" stroke-width="1.5" />
<polygon points="622.4,737.8 633.9,735.1 673.9,738.5 681.3,734.4 822.3,778.5 822.3,814.4 792.5,823.9 792.5,819.8 787.1,823.9 738.3,804.9 738.3,800.1 693.5,785.9 673.2,789.3 621.7,772.4 625.8,754.7" fill="url(#oh)" />
<polygon points="622.4,739.0 621.7,772.4 673.2,789.3 674.0,754.0" fill="url(#ob)" />
<polygon points="789.0,786.0 822.3,778.5 822.3,814.4 792.5,823.9 789.0,822.0" fill="#d4732f" />
<polygon points="625.8,737.8 671.8,753.4 686.8,750.0 799.3,783.9 819.6,778.5 681.3,735.8 675.9,739.1 633.9,735.8" fill="url(#rs)" />
<polyline points="673.9,739.0 700.0,746.0 762.7,765.6 752.0,768.0 690.0,749.0" fill="none" stroke="#d98a3a" stroke-width="2.2" />
<polyline points="741.0,773.0 789.8,788.0" fill="none" stroke="#d98a3a" stroke-width="2" />
<polygon points="658.3,711.8 668.6,719.0 680.0,734.0 674.0,739.0 662.0,736.0" fill="url(#oy)" />
<polyline points="730.0,870.5 668.0,851.5" fill="none" stroke="#10c010" stroke-width="2.2" />
<polygon points="666.0,850.8 676.0,850.5 673.5,856.0" fill="#10c010" />
<polyline points="730.0,870.5 793.0,852.0" fill="none" stroke="#c01818" stroke-width="2.6" />
<polygon points="796.0,851.0 785.0,850.5 787.5,856.5" fill="#c01818" />
<polyline points="730.0,871.0 730.0,797.0" fill="none" stroke="#0000c8" stroke-width="3" />
<polygon points="726.2,797.5 733.8,797.5 730.0,784.0" fill="#0000c8" />
</svg>
</div>
<div class="a" id="legend"></div>
<div class="a" id="lghead"></div>
<div class="a" id="lgl" style="left:0;top:52px;width:1px;height:432px;background:#62626e"></div>
<div class="a" id="lgt" style="left:0;top:52px;width:389px;height:1px;background:#3c3c46"></div>
<div class="a" id="lgcombo"></div>
<div class="a" id="lgbtn"></div>
<svg class="a" style="left:0;top:52px" width="390" height="60"><polygon points="7.2,6.3 18,6.3 12.6,15.5" fill="#fff"/><polygon points="364,35 375,35 369.5,45" fill="#fff"/></svg>
<div class="osep" style="top:125px"></div>
<div class="osep" style="top:361px"></div>
<div class="osep" style="top:436px"></div>
<div class="sw" style="top:130.0px;background:#ffe64d"></div>
<div class="bar" style="top:131.0px;width:21.0px"></div>
<div class="sw" style="top:149.0px;background:#ff7d38"></div>
<div class="bar" style="top:150.0px;width:30.0px"></div>
<div class="sw" style="top:168.0px;background:#1f1fff"></div>
<div class="bar" style="top:169.0px;width:1.0px"></div>
<div class="sw" style="top:187.0px;background:#b03029"></div>
<div class="bar" style="top:188.0px;width:24.0px"></div>
<div class="sw" style="top:206.0px;background:#9654cc"></div>
<div class="bar" style="top:207.0px;width:6.0px"></div>
<div class="sw" style="top:225.0px;background:#f04040"></div>
<div class="bar" style="top:226.0px;width:1.0px"></div>
<div class="sw" style="top:244.0px;background:#4d80ba"></div>
<div class="bar" style="top:245.0px;width:2.0px"></div>
<div class="sw" style="top:263.0px;background:#00876e"></div>
<div class="bar" style="top:264.0px;width:1.0px"></div>
<div class="sw" style="top:282.0px;background:#00ff00"></div>
<div class="bar" style="top:283.0px;width:22.5px"></div>
<div class="sw" style="top:301.0px;background:#008000"></div>
<div class="bar" style="top:302.0px;width:2.0px"></div>
<div class="sw" style="top:320.0px;background:#5ed194"></div>
<div class="bar" style="top:321.0px;width:1.0px"></div>
<div class="a" id="stealth"></div>
<div class="a" id="vtool"></div>
<div class="a" id="vsel"></div>

<div class="combo" style="left:1505px;top:69px;width:391px"></div>
<div class="combo" style="left:1505px;top:112px;width:391px"></div>
<div class="combo" style="left:1505px;top:155px;width:391px"></div>
<div class="combo" style="left:1559px;top:186px;width:337px"></div>
<div class="combo" style="left:1535px;top:213px;width:78px"></div>
<div class="a" style="left:1665px;top:219px;width:11px;height:11px;border:1px solid #333;border-radius:2px;background:#fff"></div>
<div class="a" id="olist"></div>
<div class="a" style="left:1822px;top:244px;width:1px;height:23px;background:#e5e5e5"></div>
<div class="a" style="left:1852px;top:244px;width:1px;height:23px;background:#e5e5e5"></div>
<div class="a" id="sinfo" style="width:412px"></div>
<div class="a" style="left:1511px;top:858px;width:66px;height:16px;background:#fff"></div>
<div class="a" id="export"></div>
<svg class="a" style="left:0;top:0;pointer-events:none" width="1920" height="1062" viewBox="0 0 1920 1062">
<rect x="9.2" y="30.2" width="13.4" height="13.4" rx="2.2" fill="#f4ece8" stroke="#808080" stroke-width="1"/>
<polygon points="16.00,41.50 12.02,39.20 12.02,34.60 16.00,32.30 19.98,34.60 19.98,39.20" fill="#ed6b21" stroke="#ed6b21" stroke-width="1.2" stroke-linejoin="round"/>
<path d="M81.90 30.00 L84.01 31.80 L86.78 32.02 L87.00 34.79 L88.80 36.90 L87.00 39.01 L86.78 41.78 L84.01 42.00 L81.90 43.80 L79.79 42.00 L77.02 41.78 L76.80 39.01 L75.00 36.90 L76.80 34.79 L77.02 32.02 L79.79 31.80Z" fill="#7f7f7f" stroke="#7f7f7f" stroke-width="1" stroke-linejoin="round"/><circle cx="81.90" cy="36.90" r="4.35" fill="#fff"/><circle cx="81.90" cy="36.90" r="3.45" fill="none" stroke="#ed6b21" stroke-width="1.05" stroke-dasharray="2.2 0.7"/>
<rect x="183" y="31" width="10.5" height="11.4" fill="#c0764a"/><rect x="181" y="30" width="2" height="13.6" fill="#808080"/><rect x="193" y="30" width="2" height="13.6" fill="#808080"/>
<rect x="308.6" y="30.6" width="13" height="12.6" fill="#f0f0f0" stroke="#808080" stroke-width="1"/><rect x="308.2" y="41.4" width="13.8" height="2" fill="#808080"/><rect x="313.5" y="34.6" width="8" height="0.9" fill="#808080"/><rect x="310" y="33" width="3.6" height="3.6" fill="#ed6b21"/>
<polygon points="1722.90,41.60 1718.83,39.25 1718.83,34.55 1722.90,32.20 1726.97,34.55 1726.97,39.25" fill="#78e02a" stroke="#78e02a" stroke-width="1.2" stroke-linejoin="round"/>
<polygon points="1787.10,41.60 1783.03,39.25 1783.03,34.55 1787.10,32.20 1791.17,34.55 1791.17,39.25" fill="#ffd900" stroke="#ffd900" stroke-width="1.2" stroke-linejoin="round"/>
<polygon points="1867.90,41.60 1863.83,39.25 1863.83,34.55 1867.90,32.20 1871.97,34.55 1871.97,39.25" fill="#e60000" stroke="#e60000" stroke-width="1.2" stroke-linejoin="round"/>
<path d="M1523.80 74.10 L1525.91 75.90 L1528.68 76.12 L1528.90 78.89 L1530.70 81.00 L1528.90 83.11 L1528.68 85.88 L1525.91 86.10 L1523.80 87.90 L1521.69 86.10 L1518.92 85.88 L1518.70 83.11 L1516.90 81.00 L1518.70 78.89 L1518.92 76.12 L1521.69 75.90Z" fill="#7f7f7f" stroke="#7f7f7f" stroke-width="1" stroke-linejoin="round"/><circle cx="1523.80" cy="81.00" r="4.35" fill="#fff"/><circle cx="1523.80" cy="81.00" r="3.45" fill="none" stroke="#ed6b21" stroke-width="1.05" stroke-dasharray="2.2 0.7"/>
<path d="M1542.50 81.30 v-3.2 a3.4 3.4 0 0 1 6.8 0 v3.2" fill="none" stroke="#808080" stroke-width="1.9"/><rect x="1539.90" y="81.10" width="12" height="6.8" rx="0.8" fill="#808080"/><circle cx="1545.20" cy="84.60" r="1" fill="#fff"/><rect x="1545.40" y="84.15" width="2.4" height="0.9" fill="#fff"/>
<rect x="1512.5" y="117" width="23" height="14.6" fill="#ff8000" stroke="#6a6a6a" stroke-width="1"/>
<path d="M1542.50 124.30 v-3.2 a3.4 3.4 0 0 1 6.8 0 v3.2" fill="none" stroke="#808080" stroke-width="1.9"/><rect x="1539.90" y="124.10" width="12" height="6.8" rx="0.8" fill="#808080"/><circle cx="1545.20" cy="127.60" r="1" fill="#fff"/><rect x="1545.40" y="127.15" width="2.4" height="0.9" fill="#fff"/>
<rect x="1517.7" y="160.8" width="12.8" height="12.4" fill="#fff" stroke="#808080" stroke-width="1"/><rect x="1517.2" y="171.6" width="13.8" height="2" fill="#808080"/><rect x="1522.5" y="164.4" width="8" height="0.9" fill="#808080"/><rect x="1519" y="163.2" width="3.8" height="3.8" fill="#ed6b21"/>
<polyline points="1885.00,80.00 1889.00,83.80 1893.00,80.00" fill="none" stroke="#444" stroke-width="1.1"/>
<path d="M1908.90 73.00 L1911.01 74.80 L1913.78 75.02 L1914.00 77.79 L1915.80 79.90 L1914.00 82.01 L1913.78 84.78 L1911.01 85.00 L1908.90 86.80 L1906.79 85.00 L1904.02 84.78 L1903.80 82.01 L1902.00 79.90 L1903.80 77.79 L1904.02 75.02 L1906.79 74.80Z" fill="#7f7f7f" stroke="#7f7f7f" stroke-width="1" stroke-linejoin="round"/><circle cx="1908.90" cy="79.90" r="4.35" fill="#fff"/><circle cx="1908.90" cy="79.90" r="3.45" fill="none" stroke="#ed6b21" stroke-width="1.05" stroke-dasharray="2.2 0.7"/>
<polyline points="1885.00,123.00 1889.00,126.80 1893.00,123.00" fill="none" stroke="#444" stroke-width="1.1"/>
<path d="M1908.90 116.00 L1911.01 117.80 L1913.78 118.02 L1914.00 120.79 L1915.80 122.90 L1914.00 125.01 L1913.78 127.78 L1911.01 128.00 L1908.90 129.80 L1906.79 128.00 L1904.02 127.78 L1903.80 125.01 L1902.00 122.90 L1903.80 120.79 L1904.02 118.02 L1906.79 117.80Z" fill="#7f7f7f" stroke="#7f7f7f" stroke-width="1" stroke-linejoin="round"/><circle cx="1908.90" cy="122.90" r="4.35" fill="#fff"/><circle cx="1908.90" cy="122.90" r="3.45" fill="none" stroke="#ed6b21" stroke-width="1.05" stroke-dasharray="2.2 0.7"/>
<polyline points="1885.00,166.00 1889.00,169.80 1893.00,166.00" fill="none" stroke="#444" stroke-width="1.1"/>
<path d="M1908.90 159.00 L1911.01 160.80 L1913.78 161.02 L1914.00 163.79 L1915.80 165.90 L1914.00 168.01 L1913.78 170.78 L1911.01 171.00 L1908.90 172.80 L1906.79 171.00 L1904.02 170.78 L1903.80 168.01 L1902.00 165.90 L1903.80 163.79 L1904.02 161.02 L1906.79 160.80Z" fill="#7f7f7f" stroke="#7f7f7f" stroke-width="1" stroke-linejoin="round"/><circle cx="1908.90" cy="165.90" r="4.35" fill="#fff"/><circle cx="1908.90" cy="165.90" r="3.45" fill="none" stroke="#ed6b21" stroke-width="1.05" stroke-dasharray="2.2 0.7"/>
<polyline points="1885.00,196.70 1889.00,200.50 1893.00,196.70" fill="none" stroke="#444" stroke-width="1.1"/>
<polyline points="1601.50,224.10 1605.50,227.90 1609.50,224.10" fill="none" stroke="#444" stroke-width="1.1"/>
<polyline points="1509.10,276.45 1513.40,280.75 1517.70,276.45" fill="none" stroke="#222" stroke-width="1.5"/>
<path d="M1831.60 279.00 q6.4 -8.6 12.8 0 q-6.4 8.6 -12.8 0z" fill="#fff" stroke="#808080" stroke-width="1.5" stroke-linejoin="round"/><circle cx="1838.00" cy="279.00" r="2.1" fill="#808080"/>
<path d="M1883.90 275.50 h-3.2 a1.4 1.4 0 0 0 -1.4 1.4 v7.4 a1.4 1.4 0 0 0 1.4 1.4 h7.4 a1.4 1.4 0 0 0 1.4 -1.4 v-3.2" fill="none" stroke="#808080" stroke-width="1.1"/><circle cx="1888.60" cy="276.50" r="2.7" fill="#fff" stroke="#ed6b21" stroke-width="1.3" stroke-dasharray="1.7 0.45"/>
<path d="M1539.10 297.40 h-3.6 a1.4 1.4 0 0 0 -1.4 1.4 v7.4 a1.4 1.4 0 0 0 1.4 1.4 h7.4 a1.4 1.4 0 0 0 1.4 -1.4 v-3.4" fill="none" stroke="#808080" stroke-width="1.1"/><path d="M1544.10 295.00 v5.6 M1541.30 297.80 h5.6" stroke="#ed8a55" stroke-width="1.1" fill="none"/>
<path d="M1886.00 294.10 L1888.11 295.90 L1890.88 296.12 L1891.10 298.89 L1892.90 301.00 L1891.10 303.11 L1890.88 305.88 L1888.11 306.10 L1886.00 307.90 L1883.89 306.10 L1881.12 305.88 L1880.90 303.11 L1879.10 301.00 L1880.90 298.89 L1881.12 296.12 L1883.89 295.90Z" fill="#7f7f7f" stroke="#7f7f7f" stroke-width="1" stroke-linejoin="round"/><circle cx="1886.00" cy="301.00" r="4.35" fill="#fff"/><circle cx="1886.00" cy="301.00" r="3.45" fill="none" stroke="#ed6b21" stroke-width="1.05" stroke-dasharray="2.2 0.7"/>
<path d="M1534.40 317.40 q6.7 9 13.4 0" fill="none" stroke="#808080" stroke-width="1"/><path d="M1534.40 321.80 v6.6 a1.2 1.2 0 0 0 1.2 1.2 h11 a1.2 1.2 0 0 0 1.2 -1.2 v-6.6 l-6.7 4.6 z" fill="none" stroke="#ee8a58" stroke-width="1.3" stroke-linejoin="round"/>
<path d="M1886.00 316.10 L1888.11 317.90 L1890.88 318.12 L1891.10 320.89 L1892.90 323.00 L1891.10 325.11 L1890.88 327.88 L1888.11 328.10 L1886.00 329.90 L1883.89 328.10 L1881.12 327.88 L1880.90 325.11 L1879.10 323.00 L1880.90 320.89 L1881.12 318.12 L1883.89 317.90Z" fill="#7f7f7f" stroke="#7f7f7f" stroke-width="1" stroke-linejoin="round"/><circle cx="1886.00" cy="323.00" r="4.35" fill="#fff"/><circle cx="1886.00" cy="323.00" r="3.45" fill="none" stroke="#ed6b21" stroke-width="1.05" stroke-dasharray="2.2 0.7"/>
<polyline points="1509.10,342.45 1513.40,346.75 1517.70,342.45" fill="none" stroke="#222" stroke-width="1.5"/>
<path d="M1831.60 345.00 q6.4 -8.6 12.8 0 q-6.4 8.6 -12.8 0z" fill="#fff" stroke="#808080" stroke-width="1.5" stroke-linejoin="round"/><circle cx="1838.00" cy="345.00" r="2.1" fill="#808080"/>
<path d="M1883.90 341.50 h-3.2 a1.4 1.4 0 0 0 -1.4 1.4 v7.4 a1.4 1.4 0 0 0 1.4 1.4 h7.4 a1.4 1.4 0 0 0 1.4 -1.4 v-3.2" fill="none" stroke="#808080" stroke-width="1.1"/><circle cx="1888.60" cy="342.50" r="2.7" fill="#fff" stroke="#ed6b21" stroke-width="1.3" stroke-dasharray="1.7 0.45"/>
<path d="M1539.10 363.40 h-3.6 a1.4 1.4 0 0 0 -1.4 1.4 v7.4 a1.4 1.4 0 0 0 1.4 1.4 h7.4 a1.4 1.4 0 0 0 1.4 -1.4 v-3.4" fill="none" stroke="#808080" stroke-width="1.1"/><path d="M1544.10 361.00 v5.6 M1541.30 363.80 h5.6" stroke="#ed8a55" stroke-width="1.1" fill="none"/>
<path d="M1886.00 360.10 L1888.11 361.90 L1890.88 362.12 L1891.10 364.89 L1892.90 367.00 L1891.10 369.11 L1890.88 371.88 L1888.11 372.10 L1886.00 373.90 L1883.89 372.10 L1881.12 371.88 L1880.90 369.11 L1879.10 367.00 L1880.90 364.89 L1881.12 362.12 L1883.89 361.90Z" fill="#7f7f7f" stroke="#7f7f7f" stroke-width="1" stroke-linejoin="round"/><circle cx="1886.00" cy="367.00" r="4.35" fill="#fff"/><circle cx="1886.00" cy="367.00" r="3.45" fill="none" stroke="#ed6b21" stroke-width="1.05" stroke-dasharray="2.2 0.7"/>
<path d="M1534.40 383.40 q6.7 9 13.4 0" fill="none" stroke="#808080" stroke-width="1"/><path d="M1534.40 387.80 v6.6 a1.2 1.2 0 0 0 1.2 1.2 h11 a1.2 1.2 0 0 0 1.2 -1.2 v-6.6 l-6.7 4.6 z" fill="none" stroke="#ee8a58" stroke-width="1.3" stroke-linejoin="round"/>
<path d="M1886.00 382.10 L1888.11 383.90 L1890.88 384.12 L1891.10 386.89 L1892.90 389.00 L1891.10 391.11 L1890.88 393.88 L1888.11 394.10 L1886.00 395.90 L1883.89 394.10 L1881.12 393.88 L1880.90 391.11 L1879.10 389.00 L1880.90 386.89 L1881.12 384.12 L1883.89 383.90Z" fill="#7f7f7f" stroke="#7f7f7f" stroke-width="1" stroke-linejoin="round"/><circle cx="1886.00" cy="389.00" r="4.35" fill="#fff"/><circle cx="1886.00" cy="389.00" r="3.45" fill="none" stroke="#ed6b21" stroke-width="1.05" stroke-dasharray="2.2 0.7"/>
<polyline points="1509.10,408.45 1513.40,412.75 1517.70,408.45" fill="none" stroke="#222" stroke-width="1.5"/>
<path d="M1831.60 411.00 q6.4 -8.6 12.8 0 q-6.4 8.6 -12.8 0z" fill="#fff" stroke="#808080" stroke-width="1.5" stroke-linejoin="round"/><circle cx="1838.00" cy="411.00" r="2.1" fill="#808080"/>
<path d="M1883.90 407.50 h-3.2 a1.4 1.4 0 0 0 -1.4 1.4 v7.4 a1.4 1.4 0 0 0 1.4 1.4 h7.4 a1.4 1.4 0 0 0 1.4 -1.4 v-3.2" fill="none" stroke="#808080" stroke-width="1.1"/><circle cx="1888.60" cy="408.50" r="2.7" fill="#fff" stroke="#ed6b21" stroke-width="1.3" stroke-dasharray="1.7 0.45"/>
<path d="M1539.10 429.40 h-3.6 a1.4 1.4 0 0 0 -1.4 1.4 v7.4 a1.4 1.4 0 0 0 1.4 1.4 h7.4 a1.4 1.4 0 0 0 1.4 -1.4 v-3.4" fill="none" stroke="#808080" stroke-width="1.1"/><path d="M1544.10 427.00 v5.6 M1541.30 429.80 h5.6" stroke="#ed8a55" stroke-width="1.1" fill="none"/>
<path d="M1886.00 426.10 L1888.11 427.90 L1890.88 428.12 L1891.10 430.89 L1892.90 433.00 L1891.10 435.11 L1890.88 437.88 L1888.11 438.10 L1886.00 439.90 L1883.89 438.10 L1881.12 437.88 L1880.90 435.11 L1879.10 433.00 L1880.90 430.89 L1881.12 428.12 L1883.89 427.90Z" fill="#7f7f7f" stroke="#7f7f7f" stroke-width="1" stroke-linejoin="round"/><circle cx="1886.00" cy="433.00" r="4.35" fill="#fff"/><circle cx="1886.00" cy="433.00" r="3.45" fill="none" stroke="#ed6b21" stroke-width="1.05" stroke-dasharray="2.2 0.7"/>
<path d="M1534.40 449.40 q6.7 9 13.4 0" fill="none" stroke="#808080" stroke-width="1"/><path d="M1534.40 453.80 v6.6 a1.2 1.2 0 0 0 1.2 1.2 h11 a1.2 1.2 0 0 0 1.2 -1.2 v-6.6 l-6.7 4.6 z" fill="none" stroke="#ee8a58" stroke-width="1.3" stroke-linejoin="round"/>
<path d="M1886.00 448.10 L1888.11 449.90 L1890.88 450.12 L1891.10 452.89 L1892.90 455.00 L1891.10 457.11 L1890.88 459.88 L1888.11 460.10 L1886.00 461.90 L1883.89 460.10 L1881.12 459.88 L1880.90 457.11 L1879.10 455.00 L1880.90 452.89 L1881.12 450.12 L1883.89 449.90Z" fill="#7f7f7f" stroke="#7f7f7f" stroke-width="1" stroke-linejoin="round"/><circle cx="1886.00" cy="455.00" r="4.35" fill="#fff"/><circle cx="1886.00" cy="455.00" r="3.45" fill="none" stroke="#ed6b21" stroke-width="1.05" stroke-dasharray="2.2 0.7"/>
<path d="M1534.40 471.40 q6.7 9 13.4 0" fill="none" stroke="#808080" stroke-width="1"/><path d="M1534.40 475.80 v6.6 a1.2 1.2 0 0 0 1.2 1.2 h11 a1.2 1.2 0 0 0 1.2 -1.2 v-6.6 l-6.7 4.6 z" fill="none" stroke="#ee8a58" stroke-width="1.3" stroke-linejoin="round"/>
<path d="M1886.00 470.10 L1888.11 471.90 L1890.88 472.12 L1891.10 474.89 L1892.90 477.00 L1891.10 479.11 L1890.88 481.88 L1888.11 482.10 L1886.00 483.90 L1883.89 482.10 L1881.12 481.88 L1880.90 479.11 L1879.10 477.00 L1880.90 474.89 L1881.12 472.12 L1883.89 471.90Z" fill="#7f7f7f" stroke="#7f7f7f" stroke-width="1" stroke-linejoin="round"/><circle cx="1886.00" cy="477.00" r="4.35" fill="#fff"/><circle cx="1886.00" cy="477.00" r="3.45" fill="none" stroke="#ed6b21" stroke-width="1.05" stroke-dasharray="2.2 0.7"/>
<line x1="1435.1" y1="66" x2="1435.1" y2="1034" stroke="#8a8a8a" stroke-width="2" stroke-dasharray="1 2.93"/>
<line x1="1455.1" y1="66" x2="1455.1" y2="1034" stroke="#8a8a8a" stroke-width="2" stroke-dasharray="1 2.93"/>
<rect x="1431" y="66.0" width="5" height="2" fill="#8a8a8a"/><rect x="1454" y="66.0" width="5" height="2" fill="#8a8a8a"/>
<rect x="1431" y="84.0" width="5" height="1" fill="#8a8a8a"/><rect x="1454" y="84.0" width="5" height="1" fill="#8a8a8a"/>
<rect x="1431" y="112.0" width="5" height="1" fill="#8a8a8a"/><rect x="1454" y="112.0" width="5" height="1" fill="#8a8a8a"/>
<rect x="1431" y="142.0" width="5" height="1" fill="#8a8a8a"/><rect x="1454" y="142.0" width="5" height="1" fill="#8a8a8a"/>
<rect x="1431" y="171.0" width="5" height="1" fill="#8a8a8a"/><rect x="1454" y="171.0" width="5" height="1" fill="#8a8a8a"/>
<rect x="1431" y="198.0" width="5" height="1" fill="#8a8a8a"/><rect x="1454" y="198.0" width="5" height="1" fill="#8a8a8a"/>
<rect x="1431" y="233.0" width="5" height="1" fill="#8a8a8a"/><rect x="1454" y="233.0" width="5" height="1" fill="#8a8a8a"/>
<rect x="1431" y="263.5" width="5" height="1" fill="#8a8a8a"/><rect x="1454" y="263.5" width="5" height="1" fill="#8a8a8a"/>
<rect x="1431" y="300.0" width="5" height="1" fill="#8a8a8a"/><rect x="1454" y="300.0" width="5" height="1" fill="#8a8a8a"/>
<rect x="1431" y="343.5" width="5" height="1" fill="#8a8a8a"/><rect x="1454" y="343.5" width="5" height="1" fill="#8a8a8a"/>
<rect x="1431" y="385.5" width="5" height="1" fill="#8a8a8a"/><rect x="1454" y="385.5" width="5" height="1" fill="#8a8a8a"/>
<rect x="1431" y="415.0" width="5" height="1" fill="#8a8a8a"/><rect x="1454" y="415.0" width="5" height="1" fill="#8a8a8a"/>
<rect x="1431" y="445.0" width="5" height="1" fill="#8a8a8a"/><rect x="1454" y="445.0" width="5" height="1" fill="#8a8a8a"/>
<rect x="1431" y="475.0" width="5" height="1" fill="#8a8a8a"/><rect x="1454" y="475.0" width="5" height="1" fill="#8a8a8a"/>
<rect x="1431" y="505.0" width="5" height="1" fill="#8a8a8a"/><rect x="1454" y="505.0" width="5" height="1" fill="#8a8a8a"/>
<rect x="1431" y="535.0" width="5" height="1" fill="#8a8a8a"/><rect x="1454" y="535.0" width="5" height="1" fill="#8a8a8a"/>
<rect x="1431" y="565.0" width="5" height="1" fill="#8a8a8a"/><rect x="1454" y="565.0" width="5" height="1" fill="#8a8a8a"/>
<rect x="1431" y="608.0" width="5" height="1" fill="#8a8a8a"/><rect x="1454" y="608.0" width="5" height="1" fill="#8a8a8a"/>
<rect x="1431" y="652.0" width="5" height="1" fill="#8a8a8a"/><rect x="1454" y="652.0" width="5" height="1" fill="#8a8a8a"/>
<rect x="1431" y="701.0" width="5" height="1" fill="#8a8a8a"/><rect x="1454" y="701.0" width="5" height="1" fill="#8a8a8a"/>
<rect x="1431" y="755.0" width="5" height="1" fill="#8a8a8a"/><rect x="1454" y="755.0" width="5" height="1" fill="#8a8a8a"/>
<rect x="1431" y="812.0" width="5" height="1" fill="#8a8a8a"/><rect x="1454" y="812.0" width="5" height="1" fill="#8a8a8a"/>
<rect x="1431" y="868.0" width="5" height="1" fill="#8a8a8a"/><rect x="1454" y="868.0" width="5" height="1" fill="#8a8a8a"/>
<rect x="1431" y="914.0" width="5" height="1" fill="#8a8a8a"/><rect x="1454" y="914.0" width="5" height="1" fill="#8a8a8a"/>
<rect x="1431" y="952.0" width="5" height="1" fill="#8a8a8a"/><rect x="1454" y="952.0" width="5" height="1" fill="#8a8a8a"/>
<rect x="1431" y="990.0" width="5" height="1" fill="#8a8a8a"/><rect x="1454" y="990.0" width="5" height="1" fill="#8a8a8a"/>
<rect x="1444" y="65" width="2.9" height="967" fill="#ed6b21"/>
<path d="M1445 59 L1451.8 64.4 L1451.8 65.4 L1438.2 65.4 L1438.2 64.4 Z" fill="#ed6b21" stroke="#ed6b21" stroke-width="0.8" stroke-linejoin="round"/>
<path d="M1445 1039 L1451.8 1033.6 L1451.8 1032.6 L1438.2 1032.6 L1438.2 1033.6 Z" fill="#ed6b21" stroke="#ed6b21" stroke-width="0.8" stroke-linejoin="round"/>
<path d="M1441.1 1053 v-4.4 a4.1 3.6 0 0 1 8.2 0 v1.3" fill="none" stroke="#e8651a" stroke-width="1.9"/><rect x="1439.1" y="1052.3" width="11.8" height="6.6" rx="0.8" fill="#e8651a"/><circle cx="1444.3" cy="1055.6" r="1.1" fill="#fff"/><rect x="1444.5" y="1055.1" width="2.6" height="1" fill="#fff"/>
<path d="M1490.00 1045.00 L1492.11 1046.80 L1494.88 1047.02 L1495.10 1049.79 L1496.90 1051.90 L1495.10 1054.01 L1494.88 1056.78 L1492.11 1057.00 L1490.00 1058.80 L1487.89 1057.00 L1485.12 1056.78 L1484.90 1054.01 L1483.10 1051.90 L1484.90 1049.79 L1485.12 1047.02 L1487.89 1046.80Z" fill="#7f7f7f" stroke="#7f7f7f" stroke-width="1" stroke-linejoin="round"/><circle cx="1490.00" cy="1051.90" r="4.35" fill="#fff"/><circle cx="1490.00" cy="1051.90" r="3.45" fill="none" stroke="#ed6b21" stroke-width="1.05" stroke-dasharray="2.2 0.7"/>
<rect x="12" y="1035.3" width="1366" height="2.8" fill="#ed6b21"/>
<path d="M6.4 1036.7 L12 1030.2 L13 1030.2 L13 1043.2 L12 1043.2 Z" fill="#ed6b21" stroke="#ed6b21" stroke-width="0.8" stroke-linejoin="round"/>
<path d="M1382.8 1036.7 L1377.4 1030.2 L1376.4 1030.2 L1376.4 1043.2 L1377.4 1043.2 Z" fill="#ed6b21" stroke="#ed6b21" stroke-width="0.8" stroke-linejoin="round"/>
<path d="M8.6 962.5 L24 947 L65.6 947 L65.6 988 L50 1003.3 L8.6 1003.3 Z M8.6 962.5 L50 962.5 L65.6 947 M50 962.5 L50 1003.3" fill="#424242" stroke="#f2f2f2" stroke-width="1.3" stroke-linejoin="round"/>
<path d="M74 961 L90 948 L130 948 L115 961 Z" fill="none" stroke="#f2f2f2" stroke-width="1"/>
<path d="M74 965.5 L115 965.5 L130 952.5" fill="none" stroke="#f2f2f2" stroke-width="1"/>
<path d="M74 970.0 L115 970.0 L130 957.0" fill="none" stroke="#f2f2f2" stroke-width="1"/>
<path d="M74 974.5 L115 974.5 L130 961.5" fill="none" stroke="#f2f2f2" stroke-width="1"/>
<path d="M74 979.0 L115 979.0 L130 966.0" fill="none" stroke="#f2f2f2" stroke-width="1"/>
<path d="M74 983.5 L115 983.5 L130 970.5" fill="none" stroke="#f2f2f2" stroke-width="1"/>
<path d="M74 988.0 L115 988.0 L130 975.0" fill="none" stroke="#f2f2f2" stroke-width="1"/>
<path d="M74 992.5 L115 992.5 L130 979.5" fill="none" stroke="#f2f2f2" stroke-width="1"/>
<path d="M74 997.0 L115 997.0 L130 984.0" fill="none" stroke="#f2f2f2" stroke-width="1"/>
<path d="M74 1001.5 L115 1001.5 L130 988.5" fill="none" stroke="#f2f2f2" stroke-width="1"/>
<g fill="none" stroke="#ed6b21" stroke-width="0.9"><path d="M12.6 466.0 c-4 -5 -4 -8.6 0 -8.6 c4 0 4 3.6 0 8.6z"/><circle cx="12.6" cy="460.1" r="0.9"/><path d="M26.8 454.9 c-2.6 -3.4 -2.6 -5.8 0 -5.8 c2.6 0 2.6 2.4 0 5.8z"/></g>
<path d="M13.3 467.3 h12 a2 2 0 0 0 0 -4 h-8 a2 2 0 0 1 0 -4 h7 a2 2 0 0 0 0 -4 h-6" fill="none" stroke="#e8e8e8" stroke-width="1.1" stroke-dasharray="1.4 1.1"/>
<path d="M40.4 453.5 c1 -4 6 -5 9 -3 c3 -3 9 -2 10 2 c3 2 2 6 0 8 c1 4 -2 7 -6 6 c-3 2 -8 2 -10 -1 c-4 0 -5 -4 -4 -7 c-1 -2 -1 -4 1 -5z" fill="#fff"/>
<path d="M46.4 461.0 v-7 a0.9 0.9 0 0 1 1.8 0 v-1.4 a0.9 0.9 0 0 1 1.8 0 v0.6 a0.9 0.9 0 0 1 1.8 0 v1.6 a0.9 0.9 0 0 1 1.8 0 v9 c0 3 -1.6 5 -4.4 5 c-2.6 0 -3.6 -1.4 -4.6 -3.6 l-2.2 -4.6 c1 -1.2 2.4 -0.6 3 0.4 z" fill="#ed6b21"/>
<g transform="translate(80.2,458.6) scale(0.8) translate(-80.2,-459.5)"><polyline points="72.2,456.0 80.2,448.5 88.2,456.0" fill="none" stroke="#ed6b21" stroke-width="1.3"/><polyline points="72.2,461.5 80.2,454.0 88.2,461.5" fill="none" stroke="#ed6b21" stroke-width="1.3"/><polyline points="72.2,467.0 80.2,459.5 88.2,467.0" fill="none" stroke="#ed6b21" stroke-width="1.3"/><rect x="69.0" y="469.7" width="22.5" height="3.4" fill="#d62fd6"/></g>
<g transform="translate(110.8,458.6) scale(0.8) translate(-110.8,-459.5)"><polyline points="102.8,448.5 110.8,456.0 118.8,448.5" fill="none" stroke="#ed6b21" stroke-width="1.3"/><polyline points="102.8,454.0 110.8,461.5 118.8,454.0" fill="none" stroke="#ed6b21" stroke-width="1.3"/><polyline points="102.8,459.5 110.8,467.0 118.8,459.5" fill="none" stroke="#ed6b21" stroke-width="1.3"/><rect x="99.6" y="469.7" width="22.5" height="3.4" fill="#2fa8d6"/></g>
<g transform="translate(141.0,458.6) scale(0.8) translate(-141.0,-459.5)">
<g fill="none" stroke="#fff" stroke-width="1.7" stroke-linecap="round"><path d="M140.0 456.5 l4.2 -4.2 a3 3 0 0 1 4.3 4.3 l-2.4 2.4"/><path d="M142.0 460.5 l-4.2 4.2 a3 3 0 0 1 -4.3 -4.3 l2.4 -2.4"/></g>
<g stroke="#fff" stroke-width="1.1"><path d="M136.5 454.0 l-2 -2.6 M134.0 456.5 l-3 -1.4 M145.5 463.5 l2 2.6 M148.0 461.0 l3 1.4 M139.5 453.0 l0.2 -3 M142.5 465.0 l-0.2 3"/></g>
<rect x="129.8" y="469.7" width="22.5" height="3.4" fill="#fff"/>
</g>
<g transform="translate(171.7,458.6) scale(0.8) translate(-171.7,-459.5)">
<path d="M163.2 447.5 h5 v6 h2.4 l-3 4.4 h-3.8 l-3 -4.4 h2.4z" fill="#fff"/>
<path d="M172.7 451.5 h6 v7 h2.6 l-3.4 4.4 l-0.8 2 l-2.6 0 l-0.8 -2 l-3.4 -4.4 h2.4z" fill="#ed6b21"/>
<path d="M165.7 458.5 c0 5 2 7 7 7" fill="none" stroke="#fff" stroke-width="1.1"/>
<rect x="160.5" y="469.7" width="22.5" height="3.4" fill="#d0c85a"/>
</g>
<g transform="translate(202.3,458.6) scale(0.8) translate(-202.3,-459.5)">
<circle cx="202.3" cy="453.9" r="6.2" fill="#40b8ff"/><circle cx="197.5" cy="462.1" r="6.2" fill="#ff3c82"/><circle cx="207.1" cy="462.1" r="6.2" fill="#ffc832"/><circle cx="202.3" cy="459.1" r="2.4" fill="#1a4a90"/>
<rect x="191.1" y="469.7" width="22.5" height="3.4" fill="#e79a8c"/>
</g>
<g transform="translate(232.8,458.6) scale(0.8) translate(-232.8,-459.5)">
<path d="M226.3 448.9 h13 M226.3 465.5 h13 M227.8 449.5 c0 5 4.5 5.5 4.5 7.6 c0 2.1 -4.5 2.6 -4.5 7.6 M237.8 449.5 c0 5 -4.5 5.5 -4.5 7.6 c0 2.1 4.5 2.6 4.5 7.6" fill="none" stroke="#fff" stroke-width="1.5"/>
<path d="M230.3 454.1 h5 l-2.5 2.4z M229.4 464.3 q3.4 -3 6.8 0z" fill="#ed6b21"/>
<rect x="221.6" y="469.7" width="22.5" height="3.4" fill="#4be07a"/>
</g>
<g transform="translate(263.2,458.6) scale(0.8) translate(-263.2,-459.5)">
<polygon points="267.6,456.0 265.3,457.7 266.2,460.3 263.4,460.4 262.5,463.0 260.2,461.4 257.9,463.0 257.0,460.4 254.2,460.3 255.1,457.7 252.8,456.0 255.1,454.3 254.2,451.7 257.0,451.6 257.9,449.0 260.2,450.6 262.5,449.0 263.4,451.6 266.2,451.7 265.3,454.3" fill="#ed6b21" stroke="#ed6b21" stroke-width="1.4" stroke-linejoin="round"/>
<circle cx="260.2" cy="456.0" r="2.6" fill="#5b5b5b"/>
<path d="M269.6 451.3 l-11.5 11 l-2.4 4.6 l4.8 -1.8 l11.6 -11.2z" fill="#fff" stroke="#5b5b5b" stroke-width="1"/>
<rect x="252.0" y="469.7" width="22.5" height="3.4" fill="#f0d830"/>
</g>
<circle cx="293.7" cy="459.5" r="10" fill="#000"/><path d="M293.7 459.5 v-10 a10 10 0 0 0 -10 10z M293.7 459.5 v10 a10 10 0 0 0 10 -10z" fill="#fff"/>
<g fill="none" stroke="#f4f4f4" stroke-width="1.2" stroke-linejoin="round"><path d="M314.0 454.0 l10 -5.5 l10 5.5 v11.5 l-10 5.5 l-10 -5.5z M314.0 454.0 l10 5.2 l10 -5.2 M324.0 459.2 v11.6"/></g>
<path d="M324.0 448.5 v10.6 l-10 5.6 M324.0 459.1 l10 5.6" fill="none" stroke="#e0e0e0" stroke-width="0.7" stroke-dasharray="1.3 1.3"/>
<rect x="343.6" y="448.3" width="22" height="22" fill="none" stroke="#e08040" stroke-width="1.3"/>
<path d="M350.6 448.0 h8 v12.6 h3.4 v3.6 l-5.6 4 h-3.6 l-5.6 -4 v-3.6 h3.4z" fill="#fff"/>
</svg>
<span class="t" style="top:4.5px;font-size:12px;color:#000;left:8.0px;letter-spacing:-0.34px;">File</span>
<span class="t" style="top:4.5px;font-size:12px;color:#000;left:39.0px;letter-spacing:-0.17px;">Edit</span>
<span class="t" style="top:4.5px;font-size:12px;color:#000;left:73.0px;letter-spacing:0.22px;">Window</span>
<span class="t" style="top:4.5px;font-size:12px;color:#000;left:131.0px;letter-spacing:-0.20px;">View</span>
<span class="t" style="top:4.5px;font-size:12px;color:#000;left:170.0px;letter-spacing:0.16px;">Configuration</span>
<span class="t" style="top:4.5px;font-size:12px;color:#000;left:258.0px;letter-spacing:0.08px;">Help</span>
<span class="t" style="top:28.0px;font-size:12px;color:#000;left:29.0px;letter-spacing:-0.23px;">Plater</span>
<span class="t" style="top:28.0px;font-size:12px;color:#000;left:95.0px;letter-spacing:-0.10px;">Print Settings</span>
<span class="t" style="top:28.0px;font-size:12px;color:#000;left:201.0px;letter-spacing:-0.10px;">Filament Settings</span>
<span class="t" style="top:28.0px;font-size:12px;color:#000;left:328.0px;letter-spacing:-0.13px;">Printer Settings</span>
<span class="t" style="top:28.0px;font-size:12px;color:#000;left:1734.0px;letter-spacing:0.05px;">Simple</span>
<span class="t" style="top:28.0px;font-size:12px;color:#000;left:1798.5px;letter-spacing:0.02px;">Advanced</span>
<span class="t" style="top:28.0px;font-size:12px;color:#000;left:1878.0px;font-weight:bold;letter-spacing:0.02px;">Expert</span>
<span class="t" style="top:53.6px;font-size:12.4px;color:#f2f2f2;left:24.3px;letter-spacing:-0.48px;">Legend</span>
<span class="t" style="top:83.1px;font-size:12.4px;color:#f2f2f2;left:12.5px;letter-spacing:-0.42px;">Feature type</span>
<span class="t" style="top:105.4px;font-size:12.4px;color:#f2f2f2;left:176.2px;letter-spacing:-0.52px;">Time</span>
<span class="t" style="top:105.4px;font-size:12.4px;color:#f2f2f2;left:221.0px;letter-spacing:-0.44px;">Percentage</span>
<span class="t" style="top:105.4px;font-size:12.4px;color:#f2f2f2;left:298.2px;letter-spacing:-0.29px;">Used filament</span>
<span class="t" style="top:127.6px;font-size:12.4px;color:#f2f2f2;left:31.0px;letter-spacing:-0.30px;">Perimeter</span>
<span class="t" style="top:127.6px;font-size:12.4px;color:#f2f2f2;left:176.2px;letter-spacing:-0.48px;">1h29m</span>
<span class="t" style="top:127.6px;font-size:12.4px;color:#f2f2f2;left:259.4px;letter-spacing:-1.09px;">16.7%</span>
<span class="t" style="top:127.6px;font-size:12.4px;color:#f2f2f2;left:298.2px;letter-spacing:-0.62px;">7.89 m</span>
<span class="t" style="top:127.6px;font-size:12.4px;color:#f2f2f2;left:343.4px;letter-spacing:-0.55px;">23.53 g</span>
<span class="t" style="top:146.6px;font-size:12.4px;color:#f2f2f2;left:31.0px;letter-spacing:-0.24px;">External perimeter</span>
<span class="t" style="top:146.6px;font-size:12.4px;color:#f2f2f2;left:176.2px;letter-spacing:-0.50px;">2h8m</span>
<span class="t" style="top:146.6px;font-size:12.4px;color:#f2f2f2;left:259.4px;letter-spacing:-1.09px;">24.2%</span>
<span class="t" style="top:146.6px;font-size:12.4px;color:#f2f2f2;left:298.2px;letter-spacing:-0.62px;">7.75 m</span>
<span class="t" style="top:146.6px;font-size:12.4px;color:#f2f2f2;left:343.4px;letter-spacing:-0.55px;">23.12 g</span>
<span class="t" style="top:165.6px;font-size:12.4px;color:#f2f2f2;left:31.0px;letter-spacing:-0.23px;">Overhang perimeter</span>
<span class="t" style="top:165.6px;font-size:12.4px;color:#f2f2f2;left:176.2px;letter-spacing:-0.36px;">1m</span>
<span class="t" style="top:165.6px;font-size:12.4px;color:#f2f2f2;left:259.4px;letter-spacing:-1.16px;">0.2%</span>
<span class="t" style="top:165.6px;font-size:12.4px;color:#f2f2f2;left:298.2px;letter-spacing:-0.62px;">0.05 m</span>
<span class="t" style="top:165.6px;font-size:12.4px;color:#f2f2f2;left:343.4px;letter-spacing:-0.58px;">0.15 g</span>
<span class="t" style="top:184.6px;font-size:12.4px;color:#f2f2f2;left:31.0px;letter-spacing:-0.01px;">Internal infill</span>
<span class="t" style="top:184.6px;font-size:12.4px;color:#f2f2f2;left:176.2px;letter-spacing:-0.48px;">1h42m</span>
<span class="t" style="top:184.6px;font-size:12.4px;color:#f2f2f2;left:259.4px;letter-spacing:-1.09px;">19.3%</span>
<span class="t" style="top:184.6px;font-size:12.4px;color:#f2f2f2;left:298.2px;letter-spacing:-0.62px;">6.14 m</span>
<span class="t" style="top:184.6px;font-size:12.4px;color:#f2f2f2;left:343.4px;letter-spacing:-0.55px;">18.31 g</span>
<span class="t" style="top:203.6px;font-size:12.4px;color:#f2f2f2;left:31.0px;letter-spacing:-0.20px;">Solid infill</span>
<span class="t" style="top:203.6px;font-size:12.4px;color:#f2f2f2;left:176.2px;letter-spacing:-0.37px;">26m</span>
<span class="t" style="top:203.6px;font-size:12.4px;color:#f2f2f2;left:259.4px;letter-spacing:-1.16px;">4.9%</span>
<span class="t" style="top:203.6px;font-size:12.4px;color:#f2f2f2;left:298.2px;letter-spacing:-0.62px;">1.89 m</span>
<span class="t" style="top:203.6px;font-size:12.4px;color:#f2f2f2;left:343.4px;letter-spacing:-0.58px;">5.63 g</span>
<span class="t" style="top:222.6px;font-size:12.4px;color:#f2f2f2;left:31.0px;letter-spacing:-0.11px;">Top solid infill</span>
<span class="t" style="top:222.6px;font-size:12.4px;color:#f2f2f2;left:176.2px;letter-spacing:-0.36px;">3m</span>
<span class="t" style="top:222.6px;font-size:12.4px;color:#f2f2f2;left:259.4px;letter-spacing:-1.16px;">0.6%</span>
<span class="t" style="top:222.6px;font-size:12.4px;color:#f2f2f2;left:298.2px;letter-spacing:-0.62px;">0.19 m</span>
<span class="t" style="top:222.6px;font-size:12.4px;color:#f2f2f2;left:343.4px;letter-spacing:-0.58px;">0.56 g</span>
<span class="t" style="top:241.6px;font-size:12.4px;color:#f2f2f2;left:31.0px;letter-spacing:-0.12px;">Bridge infill</span>
<span class="t" style="top:241.6px;font-size:12.4px;color:#f2f2f2;left:176.2px;letter-spacing:-0.36px;">7m</span>
<span class="t" style="top:241.6px;font-size:12.4px;color:#f2f2f2;left:259.4px;letter-spacing:-1.16px;">1.3%</span>
<span class="t" style="top:241.6px;font-size:12.4px;color:#f2f2f2;left:298.2px;letter-spacing:-0.62px;">0.39 m</span>
<span class="t" style="top:241.6px;font-size:12.4px;color:#f2f2f2;left:343.4px;letter-spacing:-0.58px;">1.17 g</span>
<span class="t" style="top:260.6px;font-size:12.4px;color:#f2f2f2;left:31.0px;letter-spacing:-0.17px;">Skirt/Brim</span>
<span class="t" style="top:260.6px;font-size:12.4px;color:#f2f2f2;left:176.2px;letter-spacing:-0.83px;">47s</span>
<span class="t" style="top:260.6px;font-size:12.4px;color:#f2f2f2;left:259.4px;letter-spacing:-1.16px;">0.1%</span>
<span class="t" style="top:260.6px;font-size:12.4px;color:#f2f2f2;left:298.2px;letter-spacing:-0.62px;">0.05 m</span>
<span class="t" style="top:260.6px;font-size:12.4px;color:#f2f2f2;left:343.4px;letter-spacing:-0.58px;">0.14 g</span>
<span class="t" style="top:279.6px;font-size:12.4px;color:#f2f2f2;left:31.0px;letter-spacing:-0.21px;">Support material</span>
<span class="t" style="top:279.6px;font-size:12.4px;color:#f2f2f2;left:176.2px;letter-spacing:-0.48px;">1h35m</span>
<span class="t" style="top:279.6px;font-size:12.4px;color:#f2f2f2;left:259.4px;letter-spacing:-1.09px;">18.0%</span>
<span class="t" style="top:279.6px;font-size:12.4px;color:#f2f2f2;left:298.2px;letter-spacing:-0.62px;">4.95 m</span>
<span class="t" style="top:279.6px;font-size:12.4px;color:#f2f2f2;left:343.4px;letter-spacing:-0.55px;">14.76 g</span>
<span class="t" style="top:298.6px;font-size:12.4px;color:#f2f2f2;left:31.0px;letter-spacing:-0.23px;">Support material interface</span>
<span class="t" style="top:298.6px;font-size:12.4px;color:#f2f2f2;left:176.2px;letter-spacing:-0.36px;">6m</span>
<span class="t" style="top:298.6px;font-size:12.4px;color:#f2f2f2;left:259.4px;letter-spacing:-1.16px;">1.2%</span>
<span class="t" style="top:298.6px;font-size:12.4px;color:#f2f2f2;left:298.2px;letter-spacing:-0.62px;">0.24 m</span>
<span class="t" style="top:298.6px;font-size:12.4px;color:#f2f2f2;left:343.4px;letter-spacing:-0.58px;">0.71 g</span>
<span class="t" style="top:317.6px;font-size:12.4px;color:#f2f2f2;left:31.0px;letter-spacing:-0.45px;">Custom</span>
<span class="t" style="top:317.6px;font-size:12.4px;color:#f2f2f2;left:176.2px;letter-spacing:-0.80px;">6s</span>
<span class="t" style="top:317.6px;font-size:12.4px;color:#f2f2f2;left:259.4px;letter-spacing:-1.16px;">0.0%</span>
<span class="t" style="top:317.6px;font-size:12.4px;color:#f2f2f2;left:298.2px;letter-spacing:-0.62px;">0.02 m</span>
<span class="t" style="top:317.6px;font-size:12.4px;color:#f2f2f2;left:343.4px;letter-spacing:-0.58px;">0.06 g</span>
<span class="t" style="top:341.1px;font-size:12.4px;color:#f2f2f2;left:8.3px;letter-spacing:-0.23px;">Estimated printing times [Normal mode]:</span>
<span class="t" style="top:366.1px;font-size:12.4px;color:#ee8040;left:8.3px;letter-spacing:-0.40px;">First layer:</span>
<span class="t" style="top:366.1px;font-size:12.4px;color:#f2f2f2;left:70.0px;letter-spacing:-0.36px;">8m</span>
<span class="t" style="top:384.9px;font-size:12.4px;color:#ee8040;left:8.3px;letter-spacing:-0.19px;">Total:</span>
<span class="t" style="top:384.9px;font-size:12.4px;color:#f2f2f2;left:70.0px;letter-spacing:-0.48px;">8h50m</span>
<span class="t" style="top:408.6px;font-size:12.4px;color:#f2f2f2;left:12.2px;letter-spacing:-0.39px;">Show stealth mode</span>
<span class="t" style="top:56.0px;font-size:12px;color:#a5a5a5;left:1462.5px;letter-spacing:-0.70px;">130.00</span>
<span class="t" style="top:72.5px;font-size:12px;color:#a5a5a5;left:1462.5px;letter-spacing:-0.70px;">125.00</span>
<span class="t" style="top:100.5px;font-size:12px;color:#a5a5a5;left:1462.5px;letter-spacing:-0.70px;">120.00</span>
<span class="t" style="top:130.5px;font-size:12px;color:#a5a5a5;left:1462.5px;letter-spacing:-0.55px;">115.00</span>
<span class="t" style="top:159.5px;font-size:12px;color:#a5a5a5;left:1462.5px;letter-spacing:-0.55px;">110.00</span>
<span class="t" style="top:186.5px;font-size:12px;color:#a5a5a5;left:1462.5px;letter-spacing:-0.70px;">105.00</span>
<span class="t" style="top:221.5px;font-size:12px;color:#a5a5a5;left:1462.5px;letter-spacing:-0.70px;">100.00</span>
<span class="t" style="top:252.0px;font-size:12px;color:#a5a5a5;left:1462.5px;letter-spacing:-0.71px;">95.00</span>
<span class="t" style="top:288.5px;font-size:12px;color:#a5a5a5;left:1462.5px;letter-spacing:-0.71px;">90.00</span>
<span class="t" style="top:332.0px;font-size:12px;color:#a5a5a5;left:1462.5px;letter-spacing:-0.71px;">85.00</span>
<span class="t" style="top:374.0px;font-size:12px;color:#a5a5a5;left:1462.5px;letter-spacing:-0.71px;">80.00</span>
<span class="t" style="top:403.5px;font-size:12px;color:#a5a5a5;left:1462.5px;letter-spacing:-0.71px;">75.00</span>
<span class="t" style="top:433.5px;font-size:12px;color:#a5a5a5;left:1462.5px;letter-spacing:-0.71px;">70.00</span>
<span class="t" style="top:463.5px;font-size:12px;color:#a5a5a5;left:1462.5px;letter-spacing:-0.71px;">65.00</span>
<span class="t" style="top:493.5px;font-size:12px;color:#a5a5a5;left:1462.5px;letter-spacing:-0.71px;">60.00</span>
<span class="t" style="top:523.5px;font-size:12px;color:#a5a5a5;left:1462.5px;letter-spacing:-0.71px;">55.00</span>
<span class="t" style="top:553.5px;font-size:12px;color:#a5a5a5;left:1462.5px;letter-spacing:-0.71px;">50.00</span>
<span class="t" style="top:596.5px;font-size:12px;color:#a5a5a5;left:1462.5px;letter-spacing:-0.71px;">45.00</span>
<span class="t" style="top:640.5px;font-size:12px;color:#a5a5a5;left:1462.5px;letter-spacing:-0.71px;">40.00</span>
<span class="t" style="top:689.5px;font-size:12px;color:#a5a5a5;left:1462.5px;letter-spacing:-0.71px;">35.00</span>
<span class="t" style="top:743.5px;font-size:12px;color:#a5a5a5;left:1462.5px;letter-spacing:-0.71px;">30.00</span>
<span class="t" style="top:800.5px;font-size:12px;color:#a5a5a5;left:1462.5px;letter-spacing:-0.71px;">25.00</span>
<span class="t" style="top:856.5px;font-size:12px;color:#a5a5a5;left:1462.5px;letter-spacing:-0.71px;">20.00</span>
<span class="t" style="top:902.5px;font-size:12px;color:#a5a5a5;left:1462.5px;letter-spacing:-0.71px;">15.00</span>
<span class="t" style="top:940.5px;font-size:12px;color:#a5a5a5;left:1462.5px;letter-spacing:-0.71px;">10.00</span>
<span class="t" style="top:978.5px;font-size:12px;color:#a5a5a5;left:1462.5px;letter-spacing:-0.69px;">5.00</span>
<span class="t" style="top:1014.0px;font-size:12px;color:#a5a5a5;left:1462.5px;letter-spacing:-0.69px;">0.20</span>
<span class="t" style="top:1029.0px;font-size:12px;color:#a5a5a5;left:1462.0px;letter-spacing:-0.56px;">(1)</span>
<span class="t" style="top:50.0px;font-size:12px;color:#a5a5a5;left:1395.5px;letter-spacing:-0.62px;">130.40</span>
<span class="t" style="top:65.0px;font-size:12px;color:#a5a5a5;left:1395.5px;letter-spacing:-0.45px;">(1439)</span>
<span class="t" style="top:1044.0px;font-size:12px;color:#a5a5a5;left:16.0px;letter-spacing:-0.84px;">591789</span>
<span class="t" style="top:1011.0px;font-size:12px;color:#a5a5a5;left:1339.5px;letter-spacing:-0.76px;">592135</span>
<span class="t" style="top:50.0px;font-size:12px;color:#000;left:1505.0px;letter-spacing:-0.05px;">Print settings:</span>
<span class="t" style="top:93.0px;font-size:12px;color:#000;left:1505.0px;letter-spacing:-0.15px;">Filament:</span>
<span class="t" style="top:136.0px;font-size:12px;color:#000;left:1505.0px;letter-spacing:-0.09px;">Printer:</span>
<span class="t" style="top:71.0px;font-size:12px;color:#000;left:1559.0px;letter-spacing:-0.26px;">0.20mm SPEED (modified)</span>
<span class="t" style="top:114.0px;font-size:12px;color:#000;left:1559.0px;letter-spacing:-0.23px;">Overture PLA</span>
<span class="t" style="top:157.0px;font-size:12px;color:#000;left:1559.0px;letter-spacing:-0.28px;">Tool_Cart_PLA_parts.3mf (Tool_Cart_PLA_parts.3mf (Tool_Ca</span>
<span class="t" style="top:188.0px;font-size:12px;color:#000;left:1506.0px;letter-spacing:-0.26px;">Supports:</span>
<span class="t" style="top:188.0px;font-size:12px;color:#000;left:1572.0px;letter-spacing:-0.04px;">For support enforcers only</span>
<span class="t" style="top:215.0px;font-size:12px;color:#000;left:1506.0px;letter-spacing:0.04px;">Infill:</span>
<span class="t" style="top:214.0px;font-size:12px;color:#000;left:1541.0px;letter-spacing:-0.34px;">20%</span>
<span class="t" style="top:215.0px;font-size:12px;color:#000;left:1634.0px;">Brim:</span>
<span class="t" style="top:246.0px;font-size:12px;color:#000;left:1512.0px;">Name</span>
<span class="t" style="top:246.0px;font-size:12px;color:#000;left:1867.0px;letter-spacing:0.04px;">Editing</span>
<span class="t" style="top:269.0px;font-size:12px;color:#000;left:1525.0px;letter-spacing:-0.43px;">Valve Tool Clip.STL_1</span>
<span class="t" style="top:291.0px;font-size:12px;color:#000;left:1553.0px;letter-spacing:-0.35px;">Valve Tool Clip.STL</span>
<span class="t" style="top:313.0px;font-size:12px;color:#000;left:1553.0px;letter-spacing:-0.25px;">Generic-Slab</span>
<span class="t" style="top:335.0px;font-size:12px;color:#000;left:1525.0px;letter-spacing:-0.43px;">Valve Tool Clip.STL_2</span>
<span class="t" style="top:357.0px;font-size:12px;color:#000;left:1553.0px;letter-spacing:-0.35px;">Valve Tool Clip.STL</span>
<span class="t" style="top:379.0px;font-size:12px;color:#000;left:1553.0px;letter-spacing:-0.25px;">Generic-Slab</span>
<span class="t" style="top:401.0px;font-size:12px;color:#000;left:1525.0px;letter-spacing:-0.43px;">Valve Tool Clip.STL_4</span>
<span class="t" style="top:423.0px;font-size:12px;color:#000;left:1553.0px;letter-spacing:-0.35px;">Valve Tool Clip.STL</span>
<span class="t" style="top:445.0px;font-size:12px;color:#000;left:1553.0px;letter-spacing:-0.25px;">Generic-Slab</span>
<span class="t" style="top:467.0px;font-size:12px;color:#000;left:1553.0px;letter-spacing:-0.25px;">Generic-Box</span>
<span class="t" style="top:856.0px;font-size:12px;color:#000;left:1514.0px;font-weight:bold;letter-spacing:-0.15px;">Sliced Info</span>
<span class="t" style="top:873.0px;font-size:12px;color:#000;left:1510.5px;letter-spacing:-0.17px;">Used Filament (g)</span>
<span class="t" style="top:888.0px;font-size:12px;color:#000;left:1529.0px;letter-spacing:0.12px;">(including spool)</span>
<span class="t" style="top:909.0px;font-size:12px;color:#000;left:1510.5px;letter-spacing:-0.13px;">Used Filament (m)</span>
<span class="t" style="top:930.5px;font-size:12px;color:#000;left:1510.5px;letter-spacing:-0.08px;">Used Filament (mm</span>
<span class="t" style="top:951.0px;font-size:12px;color:#000;left:1510.5px;letter-spacing:-0.30px;">Cost</span>
<span class="t" style="top:972.0px;font-size:12px;color:#000;left:1510.5px;letter-spacing:0.05px;">Estimated printing time:</span>
<span class="t" style="top:987.0px;font-size:12px;color:#000;left:1519.8px;letter-spacing:0.16px;">- normal mode</span>
<span class="t" style="top:1002.0px;font-size:12px;color:#000;left:1519.8px;letter-spacing:0.03px;">- stealth mode</span>
<span class="t" style="top:927.0px;font-size:8px;color:#000;left:1614.2px;">3</span>
<span class="t" style="top:930.5px;font-size:12px;color:#000;left:1618.4px;">)</span>
<span class="t" style="top:873.0px;font-size:12px;color:#000;left:1652.0px;letter-spacing:-0.50px;">88.14 (323.14)</span>
<span class="t" style="top:909.0px;font-size:12px;color:#000;left:1652.0px;letter-spacing:-0.61px;">29.55</span>
<span class="t" style="top:930.5px;font-size:12px;color:#000;left:1652.0px;letter-spacing:-0.57px;">71082.78</span>
<span class="t" style="top:951.0px;font-size:12px;color:#000;left:1652.0px;letter-spacing:-0.59px;">1.94</span>
<span class="t" style="top:987.0px;font-size:12px;color:#000;left:1652.0px;letter-spacing:-0.14px;">8h50m</span>
<span class="t" style="top:1002.0px;font-size:12px;color:#000;left:1652.0px;letter-spacing:-0.01px;">9h0m</span>
<span class="t" style="top:1036.0px;font-size:12px;color:#000;left:1672.0px;font-weight:bold;letter-spacing:-0.13px;">Export G-code</span>
</body></html>
